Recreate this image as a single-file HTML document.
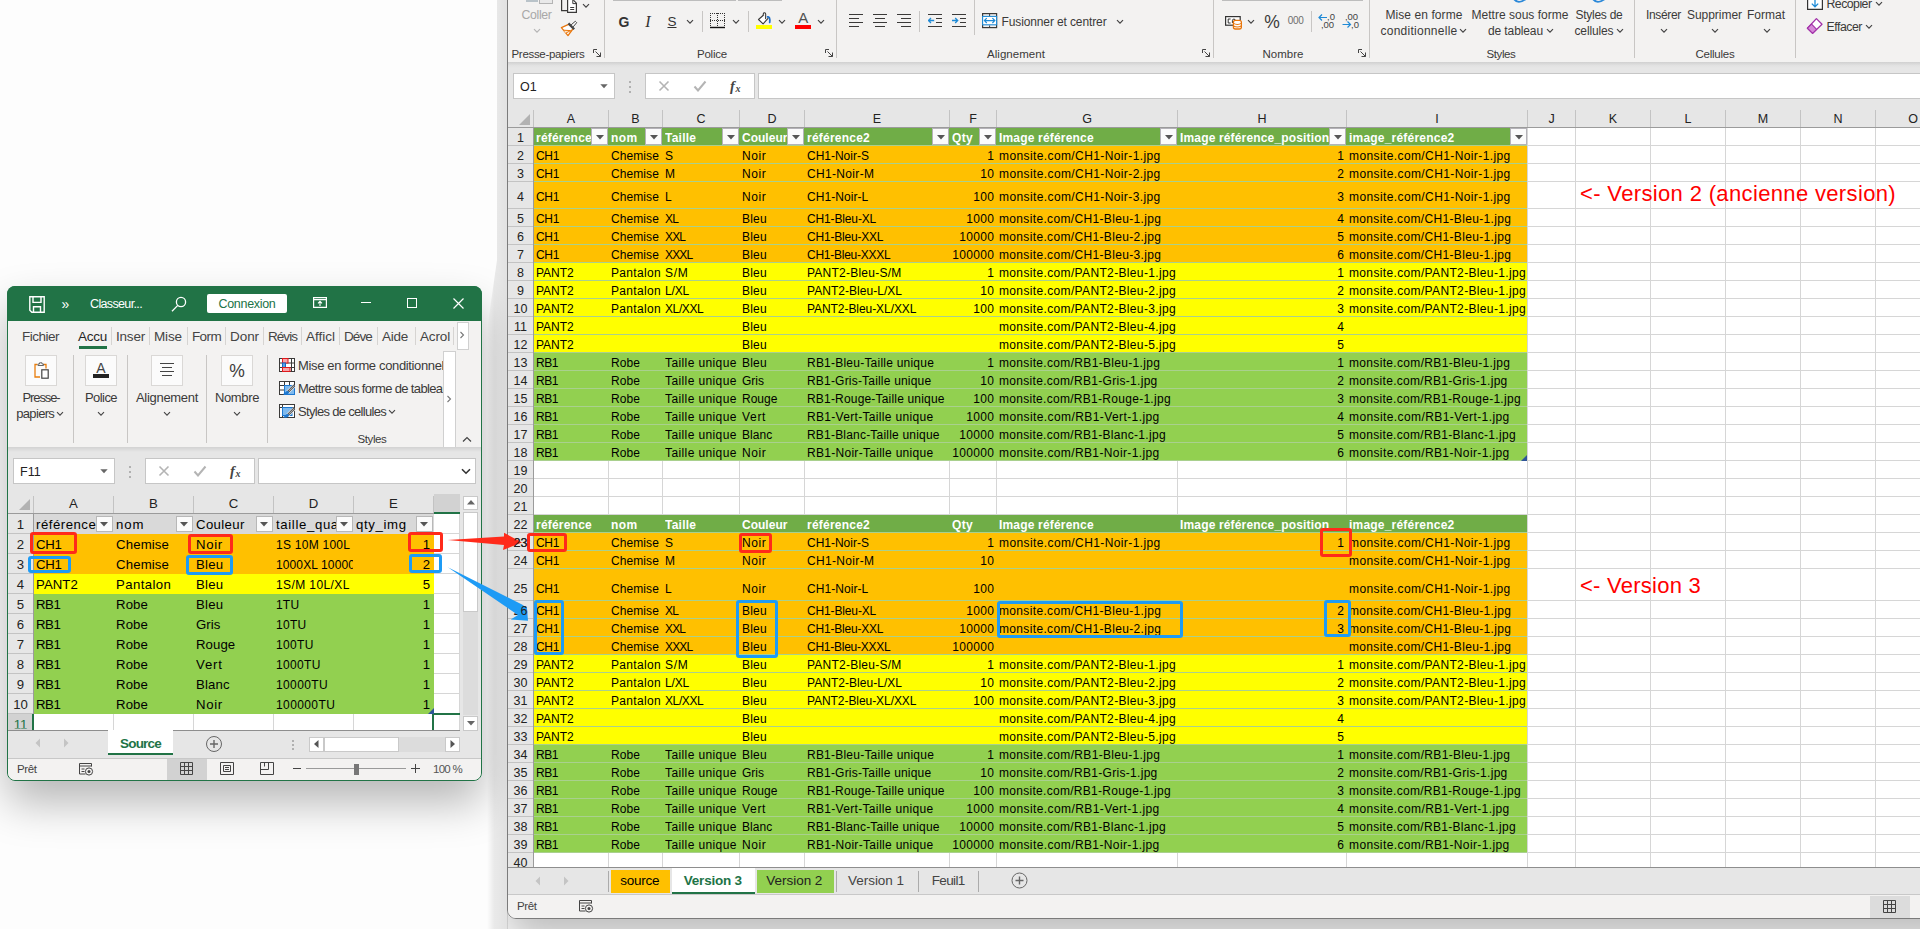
<!DOCTYPE html>
<html lang="fr"><head><meta charset="utf-8"><title>Excel</title><style>
html,body{margin:0;padding:0}
body{width:1920px;height:929px;overflow:hidden;background:#fdfdfd;position:relative;font-family:"Liberation Sans",sans-serif}
body div,body svg{position:absolute;box-sizing:border-box}
.t{white-space:nowrap}
</style></head><body>
<div style="left:7px;top:286px;width:475px;height:495px;border-radius:8px;box-shadow:0 22px 44px rgba(0,0,0,.28)"></div>
<div style="left:507px;top:-60px;width:1500px;height:979px;border-radius:0 0 0 9px;box-shadow:0 20px 40px rgba(0,0,0,.26);clip-path:inset(0 0 -200px 0)"></div>
<div style="left:487px;top:0;width:21px;height:929px;background:linear-gradient(to right,rgba(0,0,0,0),rgba(0,0,0,.08) 35%,rgba(0,0,0,.11));clip-path:polygon(10px 0,21px 0,21px 929px,0 929px,0 330px,10px 260px)"></div>
<div style="left:507px;top:-40px;width:1500px;height:959px;background:#f3f2f1;border:1px solid #7b7b7b;border-radius:0 0 0 9px"></div>
<div style="left:508px;top:62px;width:1420px;height:47px;background:#e6e6e6;"></div>
<div style="left:508px;top:62px;width:1420px;height:6px;background:linear-gradient(#d0d0d0,#e2e2e2 60%,#e6e6e6)"></div>
<div style="left:513px;top:73px;width:102px;height:26px;background:#fff;border:1px solid #c6c6c6"></div>
<div class="t" style="top:77.5px;font-size:12.5px;line-height:18px;color:#222;left:520px;">O1</div>
<svg style="left:600px;top:84px;" width="8" height="5" viewBox="0 0 8 5"><path d="M0.3 0.3h7.4l-3.7 3.9z" fill="#666"/></svg>
<div style="left:629px;top:81px;width:2px;height:2px;background:#b0b0b0;"></div>
<div style="left:629px;top:86px;width:2px;height:2px;background:#b0b0b0;"></div>
<div style="left:629px;top:91px;width:2px;height:2px;background:#b0b0b0;"></div>
<div style="left:645px;top:73px;width:110px;height:26px;background:#fff;border:1px solid #c6c6c6"></div>
<svg style="left:658px;top:80px;" width="12" height="12" viewBox="0 0 12 12"><path d="M1.5 1.5l9 9M10.5 1.5l-9 9" stroke="#b4b4b4" stroke-width="1.6" fill="none"/></svg>
<svg style="left:693px;top:80px;" width="14" height="12" viewBox="0 0 14 12"><path d="M1.5 6.5l3.5 4l7.5-9" stroke="#b4b4b4" stroke-width="2" fill="none"/></svg>
<div class="t" style="top:76px;font-size:14.5px;line-height:20px;color:#444;font-weight:bold;font-style:italic;left:730px;font-family:'Liberation Serif',serif;">f</div>
<div class="t" style="top:81.5px;font-size:10px;line-height:14px;color:#444;font-weight:bold;font-style:italic;left:735.5px;font-family:'Liberation Serif',serif;">x</div>
<div style="left:758px;top:73px;width:1170px;height:26px;background:#fff;border:1px solid #c6c6c6"></div>
<div style="left:508px;top:109px;width:1420px;height:19px;background:#e6e6e6;"></div>
<div style="left:508px;top:127px;width:1420px;height:1px;background:#9b9b9b;"></div>
<div style="left:534px;top:128px;width:1400px;height:739px;background:#fff;"></div>
<div style="left:508px;top:128px;width:25px;height:739px;background:#e6e6e6;"></div>
<div style="left:533px;top:128px;width:1px;height:739px;background:#9b9b9b;"></div>
<svg style="left:518px;top:113px;" width="13" height="13" viewBox="0 0 13 13"><path d="M12 1v11h-11z" fill="#b2b2b2"/></svg>
<div style="left:533px;top:110px;width:1px;height:17px;background:#c3c3c3;"></div>
<div class="t" style="top:109.5px;font-size:12.5px;line-height:18px;color:#222;left:371px;width:400px;text-align:center;">A</div>
<div style="left:608px;top:110px;width:1px;height:17px;background:#c3c3c3;"></div>
<div class="t" style="top:109.5px;font-size:12.5px;line-height:18px;color:#222;left:435.5px;width:400px;text-align:center;">B</div>
<div style="left:662px;top:110px;width:1px;height:17px;background:#c3c3c3;"></div>
<div class="t" style="top:109.5px;font-size:12.5px;line-height:18px;color:#222;left:501px;width:400px;text-align:center;">C</div>
<div style="left:739px;top:110px;width:1px;height:17px;background:#c3c3c3;"></div>
<div class="t" style="top:109.5px;font-size:12.5px;line-height:18px;color:#222;left:572px;width:400px;text-align:center;">D</div>
<div style="left:804px;top:110px;width:1px;height:17px;background:#c3c3c3;"></div>
<div class="t" style="top:109.5px;font-size:12.5px;line-height:18px;color:#222;left:677px;width:400px;text-align:center;">E</div>
<div style="left:949px;top:110px;width:1px;height:17px;background:#c3c3c3;"></div>
<div class="t" style="top:109.5px;font-size:12.5px;line-height:18px;color:#222;left:773px;width:400px;text-align:center;">F</div>
<div style="left:996px;top:110px;width:1px;height:17px;background:#c3c3c3;"></div>
<div class="t" style="top:109.5px;font-size:12.5px;line-height:18px;color:#222;left:887px;width:400px;text-align:center;">G</div>
<div style="left:1177px;top:110px;width:1px;height:17px;background:#c3c3c3;"></div>
<div class="t" style="top:109.5px;font-size:12.5px;line-height:18px;color:#222;left:1062px;width:400px;text-align:center;">H</div>
<div style="left:1346px;top:110px;width:1px;height:17px;background:#c3c3c3;"></div>
<div class="t" style="top:109.5px;font-size:12.5px;line-height:18px;color:#222;left:1237px;width:400px;text-align:center;">I</div>
<div style="left:1527px;top:110px;width:1px;height:17px;background:#c3c3c3;"></div>
<div class="t" style="top:109.5px;font-size:12.5px;line-height:18px;color:#222;left:1351.5px;width:400px;text-align:center;">J</div>
<div style="left:1575px;top:110px;width:1px;height:17px;background:#c3c3c3;"></div>
<div class="t" style="top:109.5px;font-size:12.5px;line-height:18px;color:#222;left:1413px;width:400px;text-align:center;">K</div>
<div style="left:1650px;top:110px;width:1px;height:17px;background:#c3c3c3;"></div>
<div class="t" style="top:109.5px;font-size:12.5px;line-height:18px;color:#222;left:1488px;width:400px;text-align:center;">L</div>
<div style="left:1725px;top:110px;width:1px;height:17px;background:#c3c3c3;"></div>
<div class="t" style="top:109.5px;font-size:12.5px;line-height:18px;color:#222;left:1563px;width:400px;text-align:center;">M</div>
<div style="left:1800px;top:110px;width:1px;height:17px;background:#c3c3c3;"></div>
<div class="t" style="top:109.5px;font-size:12.5px;line-height:18px;color:#222;left:1638px;width:400px;text-align:center;">N</div>
<div style="left:1875px;top:110px;width:1px;height:17px;background:#c3c3c3;"></div>
<div class="t" style="top:109.5px;font-size:12.5px;line-height:18px;color:#222;left:1713px;width:400px;text-align:center;">O</div>
<div style="left:608px;top:128px;width:1px;height:739px;background:#d6d6d6;"></div>
<div style="left:662px;top:128px;width:1px;height:739px;background:#d6d6d6;"></div>
<div style="left:739px;top:128px;width:1px;height:739px;background:#d6d6d6;"></div>
<div style="left:804px;top:128px;width:1px;height:739px;background:#d6d6d6;"></div>
<div style="left:949px;top:128px;width:1px;height:739px;background:#d6d6d6;"></div>
<div style="left:996px;top:128px;width:1px;height:739px;background:#d6d6d6;"></div>
<div style="left:1177px;top:128px;width:1px;height:739px;background:#d6d6d6;"></div>
<div style="left:1346px;top:128px;width:1px;height:739px;background:#d6d6d6;"></div>
<div style="left:1527px;top:128px;width:1px;height:739px;background:#d6d6d6;"></div>
<div style="left:1575px;top:128px;width:1px;height:739px;background:#d6d6d6;"></div>
<div style="left:1650px;top:128px;width:1px;height:739px;background:#d6d6d6;"></div>
<div style="left:1725px;top:128px;width:1px;height:739px;background:#d6d6d6;"></div>
<div style="left:1800px;top:128px;width:1px;height:739px;background:#d6d6d6;"></div>
<div style="left:1875px;top:128px;width:1px;height:739px;background:#d6d6d6;"></div>
<div style="left:534px;top:145px;width:1400px;height:1px;background:#d6d6d6;"></div>
<div style="left:508px;top:145px;width:25px;height:1px;background:#c3c3c3;"></div>
<div class="t" style="top:128.5px;font-size:12.5px;line-height:18px;color:#222;left:320.5px;width:400px;text-align:center;">1</div>
<div style="left:534px;top:163px;width:1400px;height:1px;background:#d6d6d6;"></div>
<div style="left:508px;top:163px;width:25px;height:1px;background:#c3c3c3;"></div>
<div class="t" style="top:146.5px;font-size:12.5px;line-height:18px;color:#222;left:320.5px;width:400px;text-align:center;">2</div>
<div style="left:534px;top:181px;width:1400px;height:1px;background:#d6d6d6;"></div>
<div style="left:508px;top:181px;width:25px;height:1px;background:#c3c3c3;"></div>
<div class="t" style="top:164.5px;font-size:12.5px;line-height:18px;color:#222;left:320.5px;width:400px;text-align:center;">3</div>
<div style="left:534px;top:208px;width:1400px;height:1px;background:#d6d6d6;"></div>
<div style="left:508px;top:208px;width:25px;height:1px;background:#c3c3c3;"></div>
<div class="t" style="top:187.5px;font-size:12.5px;line-height:18px;color:#222;left:320.5px;width:400px;text-align:center;">4</div>
<div style="left:534px;top:226px;width:1400px;height:1px;background:#d6d6d6;"></div>
<div style="left:508px;top:226px;width:25px;height:1px;background:#c3c3c3;"></div>
<div class="t" style="top:209.5px;font-size:12.5px;line-height:18px;color:#222;left:320.5px;width:400px;text-align:center;">5</div>
<div style="left:534px;top:244px;width:1400px;height:1px;background:#d6d6d6;"></div>
<div style="left:508px;top:244px;width:25px;height:1px;background:#c3c3c3;"></div>
<div class="t" style="top:227.5px;font-size:12.5px;line-height:18px;color:#222;left:320.5px;width:400px;text-align:center;">6</div>
<div style="left:534px;top:262px;width:1400px;height:1px;background:#d6d6d6;"></div>
<div style="left:508px;top:262px;width:25px;height:1px;background:#c3c3c3;"></div>
<div class="t" style="top:245.5px;font-size:12.5px;line-height:18px;color:#222;left:320.5px;width:400px;text-align:center;">7</div>
<div style="left:534px;top:280px;width:1400px;height:1px;background:#d6d6d6;"></div>
<div style="left:508px;top:280px;width:25px;height:1px;background:#c3c3c3;"></div>
<div class="t" style="top:263.5px;font-size:12.5px;line-height:18px;color:#222;left:320.5px;width:400px;text-align:center;">8</div>
<div style="left:534px;top:298px;width:1400px;height:1px;background:#d6d6d6;"></div>
<div style="left:508px;top:298px;width:25px;height:1px;background:#c3c3c3;"></div>
<div class="t" style="top:281.5px;font-size:12.5px;line-height:18px;color:#222;left:320.5px;width:400px;text-align:center;">9</div>
<div style="left:534px;top:316px;width:1400px;height:1px;background:#d6d6d6;"></div>
<div style="left:508px;top:316px;width:25px;height:1px;background:#c3c3c3;"></div>
<div class="t" style="top:299.5px;font-size:12.5px;line-height:18px;color:#222;left:320.5px;width:400px;text-align:center;">10</div>
<div style="left:534px;top:334px;width:1400px;height:1px;background:#d6d6d6;"></div>
<div style="left:508px;top:334px;width:25px;height:1px;background:#c3c3c3;"></div>
<div class="t" style="top:317.5px;font-size:12.5px;line-height:18px;color:#222;left:320.5px;width:400px;text-align:center;">11</div>
<div style="left:534px;top:352px;width:1400px;height:1px;background:#d6d6d6;"></div>
<div style="left:508px;top:352px;width:25px;height:1px;background:#c3c3c3;"></div>
<div class="t" style="top:335.5px;font-size:12.5px;line-height:18px;color:#222;left:320.5px;width:400px;text-align:center;">12</div>
<div style="left:534px;top:370px;width:1400px;height:1px;background:#d6d6d6;"></div>
<div style="left:508px;top:370px;width:25px;height:1px;background:#c3c3c3;"></div>
<div class="t" style="top:353.5px;font-size:12.5px;line-height:18px;color:#222;left:320.5px;width:400px;text-align:center;">13</div>
<div style="left:534px;top:388px;width:1400px;height:1px;background:#d6d6d6;"></div>
<div style="left:508px;top:388px;width:25px;height:1px;background:#c3c3c3;"></div>
<div class="t" style="top:371.5px;font-size:12.5px;line-height:18px;color:#222;left:320.5px;width:400px;text-align:center;">14</div>
<div style="left:534px;top:406px;width:1400px;height:1px;background:#d6d6d6;"></div>
<div style="left:508px;top:406px;width:25px;height:1px;background:#c3c3c3;"></div>
<div class="t" style="top:389.5px;font-size:12.5px;line-height:18px;color:#222;left:320.5px;width:400px;text-align:center;">15</div>
<div style="left:534px;top:424px;width:1400px;height:1px;background:#d6d6d6;"></div>
<div style="left:508px;top:424px;width:25px;height:1px;background:#c3c3c3;"></div>
<div class="t" style="top:407.5px;font-size:12.5px;line-height:18px;color:#222;left:320.5px;width:400px;text-align:center;">16</div>
<div style="left:534px;top:442px;width:1400px;height:1px;background:#d6d6d6;"></div>
<div style="left:508px;top:442px;width:25px;height:1px;background:#c3c3c3;"></div>
<div class="t" style="top:425.5px;font-size:12.5px;line-height:18px;color:#222;left:320.5px;width:400px;text-align:center;">17</div>
<div style="left:534px;top:460px;width:1400px;height:1px;background:#d6d6d6;"></div>
<div style="left:508px;top:460px;width:25px;height:1px;background:#c3c3c3;"></div>
<div class="t" style="top:443.5px;font-size:12.5px;line-height:18px;color:#222;left:320.5px;width:400px;text-align:center;">18</div>
<div style="left:534px;top:478px;width:1400px;height:1px;background:#d6d6d6;"></div>
<div style="left:508px;top:478px;width:25px;height:1px;background:#c3c3c3;"></div>
<div class="t" style="top:461.5px;font-size:12.5px;line-height:18px;color:#222;left:320.5px;width:400px;text-align:center;">19</div>
<div style="left:534px;top:496px;width:1400px;height:1px;background:#d6d6d6;"></div>
<div style="left:508px;top:496px;width:25px;height:1px;background:#c3c3c3;"></div>
<div class="t" style="top:479.5px;font-size:12.5px;line-height:18px;color:#222;left:320.5px;width:400px;text-align:center;">20</div>
<div style="left:534px;top:514px;width:1400px;height:1px;background:#d6d6d6;"></div>
<div style="left:508px;top:514px;width:25px;height:1px;background:#c3c3c3;"></div>
<div class="t" style="top:497.5px;font-size:12.5px;line-height:18px;color:#222;left:320.5px;width:400px;text-align:center;">21</div>
<div style="left:534px;top:532px;width:1400px;height:1px;background:#d6d6d6;"></div>
<div style="left:508px;top:532px;width:25px;height:1px;background:#c3c3c3;"></div>
<div class="t" style="top:515.5px;font-size:12.5px;line-height:18px;color:#222;left:320.5px;width:400px;text-align:center;">22</div>
<div style="left:534px;top:550px;width:1400px;height:1px;background:#d6d6d6;"></div>
<div style="left:508px;top:550px;width:25px;height:1px;background:#c3c3c3;"></div>
<div class="t" style="top:533.5px;font-size:12.5px;line-height:18px;color:#222;left:320.5px;width:400px;text-align:center;">23</div>
<div style="left:534px;top:568px;width:1400px;height:1px;background:#d6d6d6;"></div>
<div style="left:508px;top:568px;width:25px;height:1px;background:#c3c3c3;"></div>
<div class="t" style="top:551.5px;font-size:12.5px;line-height:18px;color:#222;left:320.5px;width:400px;text-align:center;">24</div>
<div style="left:534px;top:600px;width:1400px;height:1px;background:#d6d6d6;"></div>
<div style="left:508px;top:600px;width:25px;height:1px;background:#c3c3c3;"></div>
<div class="t" style="top:579.5px;font-size:12.5px;line-height:18px;color:#222;left:320.5px;width:400px;text-align:center;">25</div>
<div style="left:534px;top:618px;width:1400px;height:1px;background:#d6d6d6;"></div>
<div style="left:508px;top:618px;width:25px;height:1px;background:#c3c3c3;"></div>
<div class="t" style="top:601.5px;font-size:12.5px;line-height:18px;color:#222;left:320.5px;width:400px;text-align:center;">26</div>
<div style="left:534px;top:636px;width:1400px;height:1px;background:#d6d6d6;"></div>
<div style="left:508px;top:636px;width:25px;height:1px;background:#c3c3c3;"></div>
<div class="t" style="top:619.5px;font-size:12.5px;line-height:18px;color:#222;left:320.5px;width:400px;text-align:center;">27</div>
<div style="left:534px;top:654px;width:1400px;height:1px;background:#d6d6d6;"></div>
<div style="left:508px;top:654px;width:25px;height:1px;background:#c3c3c3;"></div>
<div class="t" style="top:637.5px;font-size:12.5px;line-height:18px;color:#222;left:320.5px;width:400px;text-align:center;">28</div>
<div style="left:534px;top:672px;width:1400px;height:1px;background:#d6d6d6;"></div>
<div style="left:508px;top:672px;width:25px;height:1px;background:#c3c3c3;"></div>
<div class="t" style="top:655.5px;font-size:12.5px;line-height:18px;color:#222;left:320.5px;width:400px;text-align:center;">29</div>
<div style="left:534px;top:690px;width:1400px;height:1px;background:#d6d6d6;"></div>
<div style="left:508px;top:690px;width:25px;height:1px;background:#c3c3c3;"></div>
<div class="t" style="top:673.5px;font-size:12.5px;line-height:18px;color:#222;left:320.5px;width:400px;text-align:center;">30</div>
<div style="left:534px;top:708px;width:1400px;height:1px;background:#d6d6d6;"></div>
<div style="left:508px;top:708px;width:25px;height:1px;background:#c3c3c3;"></div>
<div class="t" style="top:691.5px;font-size:12.5px;line-height:18px;color:#222;left:320.5px;width:400px;text-align:center;">31</div>
<div style="left:534px;top:726px;width:1400px;height:1px;background:#d6d6d6;"></div>
<div style="left:508px;top:726px;width:25px;height:1px;background:#c3c3c3;"></div>
<div class="t" style="top:709.5px;font-size:12.5px;line-height:18px;color:#222;left:320.5px;width:400px;text-align:center;">32</div>
<div style="left:534px;top:744px;width:1400px;height:1px;background:#d6d6d6;"></div>
<div style="left:508px;top:744px;width:25px;height:1px;background:#c3c3c3;"></div>
<div class="t" style="top:727.5px;font-size:12.5px;line-height:18px;color:#222;left:320.5px;width:400px;text-align:center;">33</div>
<div style="left:534px;top:762px;width:1400px;height:1px;background:#d6d6d6;"></div>
<div style="left:508px;top:762px;width:25px;height:1px;background:#c3c3c3;"></div>
<div class="t" style="top:745.5px;font-size:12.5px;line-height:18px;color:#222;left:320.5px;width:400px;text-align:center;">34</div>
<div style="left:534px;top:780px;width:1400px;height:1px;background:#d6d6d6;"></div>
<div style="left:508px;top:780px;width:25px;height:1px;background:#c3c3c3;"></div>
<div class="t" style="top:763.5px;font-size:12.5px;line-height:18px;color:#222;left:320.5px;width:400px;text-align:center;">35</div>
<div style="left:534px;top:798px;width:1400px;height:1px;background:#d6d6d6;"></div>
<div style="left:508px;top:798px;width:25px;height:1px;background:#c3c3c3;"></div>
<div class="t" style="top:781.5px;font-size:12.5px;line-height:18px;color:#222;left:320.5px;width:400px;text-align:center;">36</div>
<div style="left:534px;top:816px;width:1400px;height:1px;background:#d6d6d6;"></div>
<div style="left:508px;top:816px;width:25px;height:1px;background:#c3c3c3;"></div>
<div class="t" style="top:799.5px;font-size:12.5px;line-height:18px;color:#222;left:320.5px;width:400px;text-align:center;">37</div>
<div style="left:534px;top:834px;width:1400px;height:1px;background:#d6d6d6;"></div>
<div style="left:508px;top:834px;width:25px;height:1px;background:#c3c3c3;"></div>
<div class="t" style="top:817.5px;font-size:12.5px;line-height:18px;color:#222;left:320.5px;width:400px;text-align:center;">38</div>
<div style="left:534px;top:852px;width:1400px;height:1px;background:#d6d6d6;"></div>
<div style="left:508px;top:852px;width:25px;height:1px;background:#c3c3c3;"></div>
<div class="t" style="top:835.5px;font-size:12.5px;line-height:18px;color:#222;left:320.5px;width:400px;text-align:center;">39</div>
<div class="t" style="top:853.5px;font-size:12.5px;line-height:18px;color:#222;left:320.5px;width:400px;text-align:center;clip-path:inset(0 0 4px 0);">40</div>
<div style="left:534px;top:128px;width:993px;height:18px;background:#70ad47;"></div>
<div style="left:534px;top:146px;width:993px;height:117px;background:#ffc000;"></div>
<div style="left:534px;top:263px;width:993px;height:90px;background:#ffff00;"></div>
<div style="left:534px;top:353px;width:993px;height:108px;background:#92d050;"></div>
<div style="left:534px;top:145px;width:993px;height:1px;background:#a9d08e;"></div>
<div style="left:534px;top:163px;width:993px;height:1px;background:#a9d08e;"></div>
<div style="left:534px;top:181px;width:993px;height:1px;background:#a9d08e;"></div>
<div style="left:534px;top:208px;width:993px;height:1px;background:#a9d08e;"></div>
<div style="left:534px;top:226px;width:993px;height:1px;background:#a9d08e;"></div>
<div style="left:534px;top:244px;width:993px;height:1px;background:#a9d08e;"></div>
<div style="left:534px;top:262px;width:993px;height:1px;background:#a9d08e;"></div>
<div style="left:534px;top:280px;width:993px;height:1px;background:#a9d08e;"></div>
<div style="left:534px;top:298px;width:993px;height:1px;background:#a9d08e;"></div>
<div style="left:534px;top:316px;width:993px;height:1px;background:#a9d08e;"></div>
<div style="left:534px;top:334px;width:993px;height:1px;background:#a9d08e;"></div>
<div style="left:534px;top:352px;width:993px;height:1px;background:#a9d08e;"></div>
<div style="left:534px;top:370px;width:993px;height:1px;background:#a9d08e;"></div>
<div style="left:534px;top:388px;width:993px;height:1px;background:#a9d08e;"></div>
<div style="left:534px;top:406px;width:993px;height:1px;background:#a9d08e;"></div>
<div style="left:534px;top:424px;width:993px;height:1px;background:#a9d08e;"></div>
<div style="left:534px;top:442px;width:993px;height:1px;background:#a9d08e;"></div>
<div style="left:534px;top:460px;width:993px;height:1px;background:#a9d08e;"></div>
<div class="t" style="top:130px;font-size:12px;line-height:17px;color:#fff;font-weight:bold;letter-spacing:0.207px;left:536px;width:56px;overflow:hidden;">référence</div>
<div style="left:591px;top:128px;width:17px;height:17px;background:#fbfbfb;border:1px solid #b4b2b8"></div>
<svg style="left:596px;top:135px;" width="8" height="5" viewBox="0 0 8 5"><path d="M0 0h8l-4 4.5z" fill="#555"/></svg>
<div class="t" style="top:130px;font-size:12px;line-height:17px;color:#fff;font-weight:bold;letter-spacing:0.367px;left:611px;width:35px;overflow:hidden;">nom</div>
<div style="left:645px;top:128px;width:17px;height:17px;background:#fbfbfb;border:1px solid #b4b2b8"></div>
<svg style="left:650px;top:135px;" width="8" height="5" viewBox="0 0 8 5"><path d="M0 0h8l-4 4.5z" fill="#555"/></svg>
<div class="t" style="top:130px;font-size:12px;line-height:17px;color:#fff;font-weight:bold;letter-spacing:0.238px;left:665px;width:58px;overflow:hidden;">Taille</div>
<div style="left:722px;top:128px;width:17px;height:17px;background:#fbfbfb;border:1px solid #b4b2b8"></div>
<svg style="left:727px;top:135px;" width="8" height="5" viewBox="0 0 8 5"><path d="M0 0h8l-4 4.5z" fill="#555"/></svg>
<div class="t" style="top:130px;font-size:12px;line-height:17px;color:#fff;font-weight:bold;letter-spacing:0.014px;left:742px;width:46px;overflow:hidden;">Couleur</div>
<div style="left:787px;top:128px;width:17px;height:17px;background:#fbfbfb;border:1px solid #b4b2b8"></div>
<svg style="left:792px;top:135px;" width="8" height="5" viewBox="0 0 8 5"><path d="M0 0h8l-4 4.5z" fill="#555"/></svg>
<div class="t" style="top:130px;font-size:12px;line-height:17px;color:#fff;font-weight:bold;letter-spacing:0.229px;left:807px;width:126px;overflow:hidden;">référence2</div>
<div style="left:932px;top:128px;width:17px;height:17px;background:#fbfbfb;border:1px solid #b4b2b8"></div>
<svg style="left:937px;top:135px;" width="8" height="5" viewBox="0 0 8 5"><path d="M0 0h8l-4 4.5z" fill="#555"/></svg>
<div class="t" style="top:130px;font-size:12px;line-height:17px;color:#fff;font-weight:bold;letter-spacing:0.365px;left:952px;width:28px;overflow:hidden;">Qty</div>
<div style="left:979px;top:128px;width:17px;height:17px;background:#fbfbfb;border:1px solid #b4b2b8"></div>
<svg style="left:984px;top:135px;" width="8" height="5" viewBox="0 0 8 5"><path d="M0 0h8l-4 4.5z" fill="#555"/></svg>
<div class="t" style="top:130px;font-size:12px;line-height:17px;color:#fff;font-weight:bold;letter-spacing:0.182px;left:999px;width:162px;overflow:hidden;">Image référence</div>
<div style="left:1160px;top:128px;width:17px;height:17px;background:#fbfbfb;border:1px solid #b4b2b8"></div>
<svg style="left:1165px;top:135px;" width="8" height="5" viewBox="0 0 8 5"><path d="M0 0h8l-4 4.5z" fill="#555"/></svg>
<div class="t" style="top:130px;font-size:12px;line-height:17px;color:#fff;font-weight:bold;letter-spacing:0.158px;left:1180px;width:150px;overflow:hidden;">Image référence_position</div>
<div style="left:1329px;top:128px;width:17px;height:17px;background:#fbfbfb;border:1px solid #b4b2b8"></div>
<svg style="left:1334px;top:135px;" width="8" height="5" viewBox="0 0 8 5"><path d="M0 0h8l-4 4.5z" fill="#555"/></svg>
<div class="t" style="top:130px;font-size:12px;line-height:17px;color:#fff;font-weight:bold;letter-spacing:0.208px;left:1349px;width:162px;overflow:hidden;">image_référence2</div>
<div style="left:1510px;top:128px;width:17px;height:17px;background:#fbfbfb;border:1px solid #b4b2b8"></div>
<svg style="left:1515px;top:135px;" width="8" height="5" viewBox="0 0 8 5"><path d="M0 0h8l-4 4.5z" fill="#555"/></svg>
<div class="t" style="top:148px;font-size:12px;line-height:17px;color:#000;letter-spacing:-0.352px;left:536px;width:73px;overflow:hidden;">CH1</div>
<div class="t" style="top:148px;font-size:12px;line-height:17px;color:#000;letter-spacing:0.082px;left:611px;width:52px;overflow:hidden;">Chemise</div>
<div class="t" style="top:148px;font-size:12px;line-height:17px;color:#000;left:665px;width:75px;overflow:hidden;">S</div>
<div class="t" style="top:148px;font-size:12px;line-height:17px;color:#000;letter-spacing:0.540px;left:742px;width:63px;overflow:hidden;">Noir</div>
<div class="t" style="top:148px;font-size:12px;line-height:17px;color:#000;letter-spacing:-0.011px;left:807px;width:143px;overflow:hidden;">CH1-Noir-S</div>
<div class="t" style="top:148px;font-size:12px;line-height:17px;color:#000;right:926px;text-align:right;">1</div>
<div class="t" style="top:148px;font-size:12px;line-height:17px;color:#000;letter-spacing:0.394px;left:999px;width:179px;overflow:hidden;">monsite.com/CH1-Noir-1.jpg</div>
<div class="t" style="top:148px;font-size:12px;line-height:17px;color:#000;right:576px;text-align:right;">1</div>
<div class="t" style="top:148px;font-size:12px;line-height:17px;color:#000;letter-spacing:0.394px;left:1349px;width:179px;overflow:hidden;">monsite.com/CH1-Noir-1.jpg</div>
<div class="t" style="top:166px;font-size:12px;line-height:17px;color:#000;letter-spacing:-0.352px;left:536px;width:73px;overflow:hidden;">CH1</div>
<div class="t" style="top:166px;font-size:12px;line-height:17px;color:#000;letter-spacing:0.082px;left:611px;width:52px;overflow:hidden;">Chemise</div>
<div class="t" style="top:166px;font-size:12px;line-height:17px;color:#000;left:665px;width:75px;overflow:hidden;">M</div>
<div class="t" style="top:166px;font-size:12px;line-height:17px;color:#000;letter-spacing:0.540px;left:742px;width:63px;overflow:hidden;">Noir</div>
<div class="t" style="top:166px;font-size:12px;line-height:17px;color:#000;letter-spacing:0.336px;left:807px;width:143px;overflow:hidden;">CH1-Noir-M</div>
<div class="t" style="top:166px;font-size:12px;line-height:17px;color:#000;letter-spacing:0.323px;right:925.677px;text-align:right;">10</div>
<div class="t" style="top:166px;font-size:12px;line-height:17px;color:#000;letter-spacing:0.394px;left:999px;width:179px;overflow:hidden;">monsite.com/CH1-Noir-2.jpg</div>
<div class="t" style="top:166px;font-size:12px;line-height:17px;color:#000;right:576px;text-align:right;">2</div>
<div class="t" style="top:166px;font-size:12px;line-height:17px;color:#000;letter-spacing:0.394px;left:1349px;width:179px;overflow:hidden;">monsite.com/CH1-Noir-1.jpg</div>
<div class="t" style="top:189px;font-size:12px;line-height:17px;color:#000;letter-spacing:-0.352px;left:536px;width:73px;overflow:hidden;">CH1</div>
<div class="t" style="top:189px;font-size:12px;line-height:17px;color:#000;letter-spacing:0.082px;left:611px;width:52px;overflow:hidden;">Chemise</div>
<div class="t" style="top:189px;font-size:12px;line-height:17px;color:#000;left:665px;width:75px;overflow:hidden;">L</div>
<div class="t" style="top:189px;font-size:12px;line-height:17px;color:#000;letter-spacing:0.540px;left:742px;width:63px;overflow:hidden;">Noir</div>
<div class="t" style="top:189px;font-size:12px;line-height:17px;color:#000;letter-spacing:0.068px;left:807px;width:143px;overflow:hidden;">CH1-Noir-L</div>
<div class="t" style="top:189px;font-size:12px;line-height:17px;color:#000;letter-spacing:0.323px;right:925.677px;text-align:right;">100</div>
<div class="t" style="top:189px;font-size:12px;line-height:17px;color:#000;letter-spacing:0.394px;left:999px;width:179px;overflow:hidden;">monsite.com/CH1-Noir-3.jpg</div>
<div class="t" style="top:189px;font-size:12px;line-height:17px;color:#000;right:576px;text-align:right;">3</div>
<div class="t" style="top:189px;font-size:12px;line-height:17px;color:#000;letter-spacing:0.394px;left:1349px;width:179px;overflow:hidden;">monsite.com/CH1-Noir-1.jpg</div>
<div class="t" style="top:211px;font-size:12px;line-height:17px;color:#000;letter-spacing:-0.352px;left:536px;width:73px;overflow:hidden;">CH1</div>
<div class="t" style="top:211px;font-size:12px;line-height:17px;color:#000;letter-spacing:0.082px;left:611px;width:52px;overflow:hidden;">Chemise</div>
<div class="t" style="top:211px;font-size:12px;line-height:17px;color:#000;letter-spacing:-0.860px;left:665px;width:75px;overflow:hidden;">XL</div>
<div class="t" style="top:211px;font-size:12px;line-height:17px;color:#000;letter-spacing:0.192px;left:742px;width:63px;overflow:hidden;">Bleu</div>
<div class="t" style="top:211px;font-size:12px;line-height:17px;color:#000;letter-spacing:-0.141px;left:807px;width:143px;overflow:hidden;">CH1-Bleu-XL</div>
<div class="t" style="top:211px;font-size:12px;line-height:17px;color:#000;letter-spacing:0.323px;right:925.677px;text-align:right;">1000</div>
<div class="t" style="top:211px;font-size:12px;line-height:17px;color:#000;letter-spacing:0.340px;left:999px;width:179px;overflow:hidden;">monsite.com/CH1-Bleu-1.jpg</div>
<div class="t" style="top:211px;font-size:12px;line-height:17px;color:#000;right:576px;text-align:right;">4</div>
<div class="t" style="top:211px;font-size:12px;line-height:17px;color:#000;letter-spacing:0.340px;left:1349px;width:179px;overflow:hidden;">monsite.com/CH1-Bleu-1.jpg</div>
<div class="t" style="top:229px;font-size:12px;line-height:17px;color:#000;letter-spacing:-0.352px;left:536px;width:73px;overflow:hidden;">CH1</div>
<div class="t" style="top:229px;font-size:12px;line-height:17px;color:#000;letter-spacing:0.082px;left:611px;width:52px;overflow:hidden;">Chemise</div>
<div class="t" style="top:229px;font-size:12px;line-height:17px;color:#000;letter-spacing:-0.854px;left:665px;width:75px;overflow:hidden;">XXL</div>
<div class="t" style="top:229px;font-size:12px;line-height:17px;color:#000;letter-spacing:0.192px;left:742px;width:63px;overflow:hidden;">Bleu</div>
<div class="t" style="top:229px;font-size:12px;line-height:17px;color:#000;letter-spacing:-0.200px;left:807px;width:143px;overflow:hidden;">CH1-Bleu-XXL</div>
<div class="t" style="top:229px;font-size:12px;line-height:17px;color:#000;letter-spacing:0.323px;right:925.677px;text-align:right;">10000</div>
<div class="t" style="top:229px;font-size:12px;line-height:17px;color:#000;letter-spacing:0.340px;left:999px;width:179px;overflow:hidden;">monsite.com/CH1-Bleu-2.jpg</div>
<div class="t" style="top:229px;font-size:12px;line-height:17px;color:#000;right:576px;text-align:right;">5</div>
<div class="t" style="top:229px;font-size:12px;line-height:17px;color:#000;letter-spacing:0.340px;left:1349px;width:179px;overflow:hidden;">monsite.com/CH1-Bleu-1.jpg</div>
<div class="t" style="top:247px;font-size:12px;line-height:17px;color:#000;letter-spacing:-0.352px;left:536px;width:73px;overflow:hidden;">CH1</div>
<div class="t" style="top:247px;font-size:12px;line-height:17px;color:#000;letter-spacing:0.082px;left:611px;width:52px;overflow:hidden;">Chemise</div>
<div class="t" style="top:247px;font-size:12px;line-height:17px;color:#000;letter-spacing:-0.851px;left:665px;width:75px;overflow:hidden;">XXXL</div>
<div class="t" style="top:247px;font-size:12px;line-height:17px;color:#000;letter-spacing:0.192px;left:742px;width:63px;overflow:hidden;">Bleu</div>
<div class="t" style="top:247px;font-size:12px;line-height:17px;color:#000;letter-spacing:-0.249px;left:807px;width:143px;overflow:hidden;">CH1-Bleu-XXXL</div>
<div class="t" style="top:247px;font-size:12px;line-height:17px;color:#000;letter-spacing:0.323px;right:925.677px;text-align:right;">100000</div>
<div class="t" style="top:247px;font-size:12px;line-height:17px;color:#000;letter-spacing:0.340px;left:999px;width:179px;overflow:hidden;">monsite.com/CH1-Bleu-3.jpg</div>
<div class="t" style="top:247px;font-size:12px;line-height:17px;color:#000;right:576px;text-align:right;">6</div>
<div class="t" style="top:247px;font-size:12px;line-height:17px;color:#000;letter-spacing:0.340px;left:1349px;width:179px;overflow:hidden;">monsite.com/CH1-Bleu-1.jpg</div>
<div class="t" style="top:265px;font-size:12px;line-height:17px;color:#000;letter-spacing:-0.006px;left:536px;width:73px;overflow:hidden;">PANT2</div>
<div class="t" style="top:265px;font-size:12px;line-height:17px;color:#000;letter-spacing:0.316px;left:611px;width:52px;overflow:hidden;">Pantalon</div>
<div class="t" style="top:265px;font-size:12px;line-height:17px;color:#000;letter-spacing:0.709px;left:665px;width:75px;overflow:hidden;">S/M</div>
<div class="t" style="top:265px;font-size:12px;line-height:17px;color:#000;letter-spacing:0.192px;left:742px;width:63px;overflow:hidden;">Bleu</div>
<div class="t" style="top:265px;font-size:12px;line-height:17px;color:#000;letter-spacing:0.237px;left:807px;width:143px;overflow:hidden;">PANT2-Bleu-S/M</div>
<div class="t" style="top:265px;font-size:12px;line-height:17px;color:#000;right:926px;text-align:right;">1</div>
<div class="t" style="top:265px;font-size:12px;line-height:17px;color:#000;letter-spacing:0.352px;left:999px;width:179px;overflow:hidden;">monsite.com/PANT2-Bleu-1.jpg</div>
<div class="t" style="top:265px;font-size:12px;line-height:17px;color:#000;right:576px;text-align:right;">1</div>
<div class="t" style="top:265px;font-size:12px;line-height:17px;color:#000;letter-spacing:0.352px;left:1349px;width:179px;overflow:hidden;">monsite.com/PANT2-Bleu-1.jpg</div>
<div class="t" style="top:283px;font-size:12px;line-height:17px;color:#000;letter-spacing:-0.006px;left:536px;width:73px;overflow:hidden;">PANT2</div>
<div class="t" style="top:283px;font-size:12px;line-height:17px;color:#000;letter-spacing:0.316px;left:611px;width:52px;overflow:hidden;">Pantalon</div>
<div class="t" style="top:283px;font-size:12px;line-height:17px;color:#000;letter-spacing:-0.151px;left:665px;width:75px;overflow:hidden;">L/XL</div>
<div class="t" style="top:283px;font-size:12px;line-height:17px;color:#000;letter-spacing:0.192px;left:742px;width:63px;overflow:hidden;">Bleu</div>
<div class="t" style="top:283px;font-size:12px;line-height:17px;color:#000;letter-spacing:0.039px;left:807px;width:143px;overflow:hidden;">PANT2-Bleu-L/XL</div>
<div class="t" style="top:283px;font-size:12px;line-height:17px;color:#000;letter-spacing:0.323px;right:925.677px;text-align:right;">10</div>
<div class="t" style="top:283px;font-size:12px;line-height:17px;color:#000;letter-spacing:0.352px;left:999px;width:179px;overflow:hidden;">monsite.com/PANT2-Bleu-2.jpg</div>
<div class="t" style="top:283px;font-size:12px;line-height:17px;color:#000;right:576px;text-align:right;">2</div>
<div class="t" style="top:283px;font-size:12px;line-height:17px;color:#000;letter-spacing:0.352px;left:1349px;width:179px;overflow:hidden;">monsite.com/PANT2-Bleu-1.jpg</div>
<div class="t" style="top:301px;font-size:12px;line-height:17px;color:#000;letter-spacing:-0.006px;left:536px;width:73px;overflow:hidden;">PANT2</div>
<div class="t" style="top:301px;font-size:12px;line-height:17px;color:#000;letter-spacing:0.316px;left:611px;width:52px;overflow:hidden;">Pantalon</div>
<div class="t" style="top:301px;font-size:12px;line-height:17px;color:#000;letter-spacing:-0.381px;left:665px;width:75px;overflow:hidden;">XL/XXL</div>
<div class="t" style="top:301px;font-size:12px;line-height:17px;color:#000;letter-spacing:0.192px;left:742px;width:63px;overflow:hidden;">Bleu</div>
<div class="t" style="top:301px;font-size:12px;line-height:17px;color:#000;letter-spacing:-0.065px;left:807px;width:143px;overflow:hidden;">PANT2-Bleu-XL/XXL</div>
<div class="t" style="top:301px;font-size:12px;line-height:17px;color:#000;letter-spacing:0.323px;right:925.677px;text-align:right;">100</div>
<div class="t" style="top:301px;font-size:12px;line-height:17px;color:#000;letter-spacing:0.352px;left:999px;width:179px;overflow:hidden;">monsite.com/PANT2-Bleu-3.jpg</div>
<div class="t" style="top:301px;font-size:12px;line-height:17px;color:#000;right:576px;text-align:right;">3</div>
<div class="t" style="top:301px;font-size:12px;line-height:17px;color:#000;letter-spacing:0.352px;left:1349px;width:179px;overflow:hidden;">monsite.com/PANT2-Bleu-1.jpg</div>
<div class="t" style="top:319px;font-size:12px;line-height:17px;color:#000;letter-spacing:-0.006px;left:536px;width:73px;overflow:hidden;">PANT2</div>
<div class="t" style="top:319px;font-size:12px;line-height:17px;color:#000;letter-spacing:0.192px;left:742px;width:63px;overflow:hidden;">Bleu</div>
<div class="t" style="top:319px;font-size:12px;line-height:17px;color:#000;letter-spacing:0.352px;left:999px;width:179px;overflow:hidden;">monsite.com/PANT2-Bleu-4.jpg</div>
<div class="t" style="top:319px;font-size:12px;line-height:17px;color:#000;right:576px;text-align:right;">4</div>
<div class="t" style="top:337px;font-size:12px;line-height:17px;color:#000;letter-spacing:-0.006px;left:536px;width:73px;overflow:hidden;">PANT2</div>
<div class="t" style="top:337px;font-size:12px;line-height:17px;color:#000;letter-spacing:0.192px;left:742px;width:63px;overflow:hidden;">Bleu</div>
<div class="t" style="top:337px;font-size:12px;line-height:17px;color:#000;letter-spacing:0.352px;left:999px;width:179px;overflow:hidden;">monsite.com/PANT2-Bleu-5.jpg</div>
<div class="t" style="top:337px;font-size:12px;line-height:17px;color:#000;right:576px;text-align:right;">5</div>
<div class="t" style="top:355px;font-size:12px;line-height:17px;color:#000;letter-spacing:-0.449px;left:536px;width:73px;overflow:hidden;">RB1</div>
<div class="t" style="top:355px;font-size:12px;line-height:17px;color:#000;letter-spacing:0.049px;left:611px;width:52px;overflow:hidden;">Robe</div>
<div class="t" style="top:355px;font-size:12px;line-height:17px;color:#000;letter-spacing:0.392px;left:665px;width:75px;overflow:hidden;">Taille unique</div>
<div class="t" style="top:355px;font-size:12px;line-height:17px;color:#000;letter-spacing:0.192px;left:742px;width:63px;overflow:hidden;">Bleu</div>
<div class="t" style="top:355px;font-size:12px;line-height:17px;color:#000;letter-spacing:0.226px;left:807px;width:143px;overflow:hidden;">RB1-Bleu-Taille unique</div>
<div class="t" style="top:355px;font-size:12px;line-height:17px;color:#000;right:926px;text-align:right;">1</div>
<div class="t" style="top:355px;font-size:12px;line-height:17px;color:#000;letter-spacing:0.329px;left:999px;width:179px;overflow:hidden;">monsite.com/RB1-Bleu-1.jpg</div>
<div class="t" style="top:355px;font-size:12px;line-height:17px;color:#000;right:576px;text-align:right;">1</div>
<div class="t" style="top:355px;font-size:12px;line-height:17px;color:#000;letter-spacing:0.329px;left:1349px;width:179px;overflow:hidden;">monsite.com/RB1-Bleu-1.jpg</div>
<div class="t" style="top:373px;font-size:12px;line-height:17px;color:#000;letter-spacing:-0.449px;left:536px;width:73px;overflow:hidden;">RB1</div>
<div class="t" style="top:373px;font-size:12px;line-height:17px;color:#000;letter-spacing:0.049px;left:611px;width:52px;overflow:hidden;">Robe</div>
<div class="t" style="top:373px;font-size:12px;line-height:17px;color:#000;letter-spacing:0.392px;left:665px;width:75px;overflow:hidden;">Taille unique</div>
<div class="t" style="top:373px;font-size:12px;line-height:17px;color:#000;letter-spacing:0.021px;left:742px;width:63px;overflow:hidden;">Gris</div>
<div class="t" style="top:373px;font-size:12px;line-height:17px;color:#000;letter-spacing:0.195px;left:807px;width:143px;overflow:hidden;">RB1-Gris-Taille unique</div>
<div class="t" style="top:373px;font-size:12px;line-height:17px;color:#000;letter-spacing:0.323px;right:925.677px;text-align:right;">10</div>
<div class="t" style="top:373px;font-size:12px;line-height:17px;color:#000;letter-spacing:0.303px;left:999px;width:179px;overflow:hidden;">monsite.com/RB1-Gris-1.jpg</div>
<div class="t" style="top:373px;font-size:12px;line-height:17px;color:#000;right:576px;text-align:right;">2</div>
<div class="t" style="top:373px;font-size:12px;line-height:17px;color:#000;letter-spacing:0.303px;left:1349px;width:179px;overflow:hidden;">monsite.com/RB1-Gris-1.jpg</div>
<div class="t" style="top:391px;font-size:12px;line-height:17px;color:#000;letter-spacing:-0.449px;left:536px;width:73px;overflow:hidden;">RB1</div>
<div class="t" style="top:391px;font-size:12px;line-height:17px;color:#000;letter-spacing:0.049px;left:611px;width:52px;overflow:hidden;">Robe</div>
<div class="t" style="top:391px;font-size:12px;line-height:17px;color:#000;letter-spacing:0.392px;left:665px;width:75px;overflow:hidden;">Taille unique</div>
<div class="t" style="top:391px;font-size:12px;line-height:17px;color:#000;letter-spacing:0.004px;left:742px;width:63px;overflow:hidden;">Rouge</div>
<div class="t" style="top:391px;font-size:12px;line-height:17px;color:#000;letter-spacing:0.184px;left:807px;width:143px;overflow:hidden;">RB1-Rouge-Taille unique</div>
<div class="t" style="top:391px;font-size:12px;line-height:17px;color:#000;letter-spacing:0.323px;right:925.677px;text-align:right;">100</div>
<div class="t" style="top:391px;font-size:12px;line-height:17px;color:#000;letter-spacing:0.289px;left:999px;width:179px;overflow:hidden;">monsite.com/RB1-Rouge-1.jpg</div>
<div class="t" style="top:391px;font-size:12px;line-height:17px;color:#000;right:576px;text-align:right;">3</div>
<div class="t" style="top:391px;font-size:12px;line-height:17px;color:#000;letter-spacing:0.289px;left:1349px;width:179px;overflow:hidden;">monsite.com/RB1-Rouge-1.jpg</div>
<div class="t" style="top:409px;font-size:12px;line-height:17px;color:#000;letter-spacing:-0.449px;left:536px;width:73px;overflow:hidden;">RB1</div>
<div class="t" style="top:409px;font-size:12px;line-height:17px;color:#000;letter-spacing:0.049px;left:611px;width:52px;overflow:hidden;">Robe</div>
<div class="t" style="top:409px;font-size:12px;line-height:17px;color:#000;letter-spacing:0.392px;left:665px;width:75px;overflow:hidden;">Taille unique</div>
<div class="t" style="top:409px;font-size:12px;line-height:17px;color:#000;letter-spacing:0.698px;left:742px;width:63px;overflow:hidden;">Vert</div>
<div class="t" style="top:409px;font-size:12px;line-height:17px;color:#000;letter-spacing:0.318px;left:807px;width:143px;overflow:hidden;">RB1-Vert-Taille unique</div>
<div class="t" style="top:409px;font-size:12px;line-height:17px;color:#000;letter-spacing:0.323px;right:925.677px;text-align:right;">1000</div>
<div class="t" style="top:409px;font-size:12px;line-height:17px;color:#000;letter-spacing:0.407px;left:999px;width:179px;overflow:hidden;">monsite.com/RB1-Vert-1.jpg</div>
<div class="t" style="top:409px;font-size:12px;line-height:17px;color:#000;right:576px;text-align:right;">4</div>
<div class="t" style="top:409px;font-size:12px;line-height:17px;color:#000;letter-spacing:0.407px;left:1349px;width:179px;overflow:hidden;">monsite.com/RB1-Vert-1.jpg</div>
<div class="t" style="top:427px;font-size:12px;line-height:17px;color:#000;letter-spacing:-0.449px;left:536px;width:73px;overflow:hidden;">RB1</div>
<div class="t" style="top:427px;font-size:12px;line-height:17px;color:#000;letter-spacing:0.049px;left:611px;width:52px;overflow:hidden;">Robe</div>
<div class="t" style="top:427px;font-size:12px;line-height:17px;color:#000;letter-spacing:0.392px;left:665px;width:75px;overflow:hidden;">Taille unique</div>
<div class="t" style="top:427px;font-size:12px;line-height:17px;color:#000;letter-spacing:0.068px;left:742px;width:63px;overflow:hidden;">Blanc</div>
<div class="t" style="top:427px;font-size:12px;line-height:17px;color:#000;letter-spacing:0.198px;left:807px;width:143px;overflow:hidden;">RB1-Blanc-Taille unique</div>
<div class="t" style="top:427px;font-size:12px;line-height:17px;color:#000;letter-spacing:0.323px;right:925.677px;text-align:right;">10000</div>
<div class="t" style="top:427px;font-size:12px;line-height:17px;color:#000;letter-spacing:0.301px;left:999px;width:179px;overflow:hidden;">monsite.com/RB1-Blanc-1.jpg</div>
<div class="t" style="top:427px;font-size:12px;line-height:17px;color:#000;right:576px;text-align:right;">5</div>
<div class="t" style="top:427px;font-size:12px;line-height:17px;color:#000;letter-spacing:0.301px;left:1349px;width:179px;overflow:hidden;">monsite.com/RB1-Blanc-1.jpg</div>
<div class="t" style="top:445px;font-size:12px;line-height:17px;color:#000;letter-spacing:-0.449px;left:536px;width:73px;overflow:hidden;">RB1</div>
<div class="t" style="top:445px;font-size:12px;line-height:17px;color:#000;letter-spacing:0.049px;left:611px;width:52px;overflow:hidden;">Robe</div>
<div class="t" style="top:445px;font-size:12px;line-height:17px;color:#000;letter-spacing:0.392px;left:665px;width:75px;overflow:hidden;">Taille unique</div>
<div class="t" style="top:445px;font-size:12px;line-height:17px;color:#000;letter-spacing:0.540px;left:742px;width:63px;overflow:hidden;">Noir</div>
<div class="t" style="top:445px;font-size:12px;line-height:17px;color:#000;letter-spacing:0.289px;left:807px;width:143px;overflow:hidden;">RB1-Noir-Taille unique</div>
<div class="t" style="top:445px;font-size:12px;line-height:17px;color:#000;letter-spacing:0.323px;right:925.677px;text-align:right;">100000</div>
<div class="t" style="top:445px;font-size:12px;line-height:17px;color:#000;letter-spacing:0.382px;left:999px;width:179px;overflow:hidden;">monsite.com/RB1-Noir-1.jpg</div>
<div class="t" style="top:445px;font-size:12px;line-height:17px;color:#000;right:576px;text-align:right;">6</div>
<div class="t" style="top:445px;font-size:12px;line-height:17px;color:#000;letter-spacing:0.382px;left:1349px;width:179px;overflow:hidden;">monsite.com/RB1-Noir-1.jpg</div>
<div style="left:534px;top:515px;width:993px;height:18px;background:#70ad47;"></div>
<div style="left:534px;top:533px;width:993px;height:122px;background:#ffc000;"></div>
<div style="left:534px;top:655px;width:993px;height:90px;background:#ffff00;"></div>
<div style="left:534px;top:745px;width:993px;height:108px;background:#92d050;"></div>
<div style="left:534px;top:532px;width:993px;height:1px;background:#a9d08e;"></div>
<div style="left:534px;top:550px;width:993px;height:1px;background:#a9d08e;"></div>
<div style="left:534px;top:568px;width:993px;height:1px;background:#a9d08e;"></div>
<div style="left:534px;top:600px;width:993px;height:1px;background:#a9d08e;"></div>
<div style="left:534px;top:618px;width:993px;height:1px;background:#a9d08e;"></div>
<div style="left:534px;top:636px;width:993px;height:1px;background:#a9d08e;"></div>
<div style="left:534px;top:654px;width:993px;height:1px;background:#a9d08e;"></div>
<div style="left:534px;top:672px;width:993px;height:1px;background:#a9d08e;"></div>
<div style="left:534px;top:690px;width:993px;height:1px;background:#a9d08e;"></div>
<div style="left:534px;top:708px;width:993px;height:1px;background:#a9d08e;"></div>
<div style="left:534px;top:726px;width:993px;height:1px;background:#a9d08e;"></div>
<div style="left:534px;top:744px;width:993px;height:1px;background:#a9d08e;"></div>
<div style="left:534px;top:762px;width:993px;height:1px;background:#a9d08e;"></div>
<div style="left:534px;top:780px;width:993px;height:1px;background:#a9d08e;"></div>
<div style="left:534px;top:798px;width:993px;height:1px;background:#a9d08e;"></div>
<div style="left:534px;top:816px;width:993px;height:1px;background:#a9d08e;"></div>
<div style="left:534px;top:834px;width:993px;height:1px;background:#a9d08e;"></div>
<div style="left:534px;top:852px;width:993px;height:1px;background:#a9d08e;"></div>
<div class="t" style="top:517px;font-size:12px;line-height:17px;color:#fff;font-weight:bold;letter-spacing:0.207px;left:536px;width:112px;overflow:hidden;">référence</div>
<div class="t" style="top:517px;font-size:12px;line-height:17px;color:#fff;font-weight:bold;letter-spacing:0.367px;left:611px;width:91px;overflow:hidden;">nom</div>
<div class="t" style="top:517px;font-size:12px;line-height:17px;color:#fff;font-weight:bold;letter-spacing:0.238px;left:665px;width:114px;overflow:hidden;">Taille</div>
<div class="t" style="top:517px;font-size:12px;line-height:17px;color:#fff;font-weight:bold;letter-spacing:0.014px;left:742px;width:102px;overflow:hidden;">Couleur</div>
<div class="t" style="top:517px;font-size:12px;line-height:17px;color:#fff;font-weight:bold;letter-spacing:0.229px;left:807px;width:182px;overflow:hidden;">référence2</div>
<div class="t" style="top:517px;font-size:12px;line-height:17px;color:#fff;font-weight:bold;letter-spacing:0.365px;left:952px;width:84px;overflow:hidden;">Qty</div>
<div class="t" style="top:517px;font-size:12px;line-height:17px;color:#fff;font-weight:bold;letter-spacing:0.182px;left:999px;width:218px;overflow:hidden;">Image référence</div>
<div class="t" style="top:517px;font-size:12px;line-height:17px;color:#fff;font-weight:bold;letter-spacing:0.158px;left:1180px;width:206px;overflow:hidden;">Image référence_position</div>
<div class="t" style="top:517px;font-size:12px;line-height:17px;color:#fff;font-weight:bold;letter-spacing:0.208px;left:1349px;width:218px;overflow:hidden;">image_référence2</div>
<div class="t" style="top:535px;font-size:12px;line-height:17px;color:#000;letter-spacing:-0.352px;left:536px;width:73px;overflow:hidden;">CH1</div>
<div class="t" style="top:535px;font-size:12px;line-height:17px;color:#000;letter-spacing:0.082px;left:611px;width:52px;overflow:hidden;">Chemise</div>
<div class="t" style="top:535px;font-size:12px;line-height:17px;color:#000;left:665px;width:75px;overflow:hidden;">S</div>
<div class="t" style="top:535px;font-size:12px;line-height:17px;color:#000;letter-spacing:0.540px;left:742px;width:63px;overflow:hidden;">Noir</div>
<div class="t" style="top:535px;font-size:12px;line-height:17px;color:#000;letter-spacing:-0.011px;left:807px;width:143px;overflow:hidden;">CH1-Noir-S</div>
<div class="t" style="top:535px;font-size:12px;line-height:17px;color:#000;right:926px;text-align:right;">1</div>
<div class="t" style="top:535px;font-size:12px;line-height:17px;color:#000;letter-spacing:0.394px;left:999px;width:179px;overflow:hidden;">monsite.com/CH1-Noir-1.jpg</div>
<div class="t" style="top:535px;font-size:12px;line-height:17px;color:#000;right:576px;text-align:right;">1</div>
<div class="t" style="top:535px;font-size:12px;line-height:17px;color:#000;letter-spacing:0.394px;left:1349px;width:179px;overflow:hidden;">monsite.com/CH1-Noir-1.jpg</div>
<div class="t" style="top:553px;font-size:12px;line-height:17px;color:#000;letter-spacing:-0.352px;left:536px;width:73px;overflow:hidden;">CH1</div>
<div class="t" style="top:553px;font-size:12px;line-height:17px;color:#000;letter-spacing:0.082px;left:611px;width:52px;overflow:hidden;">Chemise</div>
<div class="t" style="top:553px;font-size:12px;line-height:17px;color:#000;left:665px;width:75px;overflow:hidden;">M</div>
<div class="t" style="top:553px;font-size:12px;line-height:17px;color:#000;letter-spacing:0.540px;left:742px;width:63px;overflow:hidden;">Noir</div>
<div class="t" style="top:553px;font-size:12px;line-height:17px;color:#000;letter-spacing:0.336px;left:807px;width:143px;overflow:hidden;">CH1-Noir-M</div>
<div class="t" style="top:553px;font-size:12px;line-height:17px;color:#000;letter-spacing:0.323px;right:925.677px;text-align:right;">10</div>
<div class="t" style="top:553px;font-size:12px;line-height:17px;color:#000;letter-spacing:0.394px;left:1349px;width:179px;overflow:hidden;">monsite.com/CH1-Noir-1.jpg</div>
<div class="t" style="top:581px;font-size:12px;line-height:17px;color:#000;letter-spacing:-0.352px;left:536px;width:73px;overflow:hidden;">CH1</div>
<div class="t" style="top:581px;font-size:12px;line-height:17px;color:#000;letter-spacing:0.082px;left:611px;width:52px;overflow:hidden;">Chemise</div>
<div class="t" style="top:581px;font-size:12px;line-height:17px;color:#000;left:665px;width:75px;overflow:hidden;">L</div>
<div class="t" style="top:581px;font-size:12px;line-height:17px;color:#000;letter-spacing:0.540px;left:742px;width:63px;overflow:hidden;">Noir</div>
<div class="t" style="top:581px;font-size:12px;line-height:17px;color:#000;letter-spacing:0.068px;left:807px;width:143px;overflow:hidden;">CH1-Noir-L</div>
<div class="t" style="top:581px;font-size:12px;line-height:17px;color:#000;letter-spacing:0.323px;right:925.677px;text-align:right;">100</div>
<div class="t" style="top:581px;font-size:12px;line-height:17px;color:#000;letter-spacing:0.394px;left:1349px;width:179px;overflow:hidden;">monsite.com/CH1-Noir-1.jpg</div>
<div class="t" style="top:603px;font-size:12px;line-height:17px;color:#000;letter-spacing:-0.352px;left:536px;width:73px;overflow:hidden;">CH1</div>
<div class="t" style="top:603px;font-size:12px;line-height:17px;color:#000;letter-spacing:0.082px;left:611px;width:52px;overflow:hidden;">Chemise</div>
<div class="t" style="top:603px;font-size:12px;line-height:17px;color:#000;letter-spacing:-0.860px;left:665px;width:75px;overflow:hidden;">XL</div>
<div class="t" style="top:603px;font-size:12px;line-height:17px;color:#000;letter-spacing:0.192px;left:742px;width:63px;overflow:hidden;">Bleu</div>
<div class="t" style="top:603px;font-size:12px;line-height:17px;color:#000;letter-spacing:-0.141px;left:807px;width:143px;overflow:hidden;">CH1-Bleu-XL</div>
<div class="t" style="top:603px;font-size:12px;line-height:17px;color:#000;letter-spacing:0.323px;right:925.677px;text-align:right;">1000</div>
<div class="t" style="top:603px;font-size:12px;line-height:17px;color:#000;letter-spacing:0.340px;left:999px;width:179px;overflow:hidden;">monsite.com/CH1-Bleu-1.jpg</div>
<div class="t" style="top:603px;font-size:12px;line-height:17px;color:#000;right:576px;text-align:right;">2</div>
<div class="t" style="top:603px;font-size:12px;line-height:17px;color:#000;letter-spacing:0.340px;left:1349px;width:179px;overflow:hidden;">monsite.com/CH1-Bleu-1.jpg</div>
<div class="t" style="top:621px;font-size:12px;line-height:17px;color:#000;letter-spacing:-0.352px;left:536px;width:73px;overflow:hidden;">CH1</div>
<div class="t" style="top:621px;font-size:12px;line-height:17px;color:#000;letter-spacing:0.082px;left:611px;width:52px;overflow:hidden;">Chemise</div>
<div class="t" style="top:621px;font-size:12px;line-height:17px;color:#000;letter-spacing:-0.854px;left:665px;width:75px;overflow:hidden;">XXL</div>
<div class="t" style="top:621px;font-size:12px;line-height:17px;color:#000;letter-spacing:0.192px;left:742px;width:63px;overflow:hidden;">Bleu</div>
<div class="t" style="top:621px;font-size:12px;line-height:17px;color:#000;letter-spacing:-0.200px;left:807px;width:143px;overflow:hidden;">CH1-Bleu-XXL</div>
<div class="t" style="top:621px;font-size:12px;line-height:17px;color:#000;letter-spacing:0.323px;right:925.677px;text-align:right;">10000</div>
<div class="t" style="top:621px;font-size:12px;line-height:17px;color:#000;letter-spacing:0.340px;left:999px;width:179px;overflow:hidden;">monsite.com/CH1-Bleu-2.jpg</div>
<div class="t" style="top:621px;font-size:12px;line-height:17px;color:#000;right:576px;text-align:right;">3</div>
<div class="t" style="top:621px;font-size:12px;line-height:17px;color:#000;letter-spacing:0.340px;left:1349px;width:179px;overflow:hidden;">monsite.com/CH1-Bleu-1.jpg</div>
<div class="t" style="top:639px;font-size:12px;line-height:17px;color:#000;letter-spacing:-0.352px;left:536px;width:73px;overflow:hidden;">CH1</div>
<div class="t" style="top:639px;font-size:12px;line-height:17px;color:#000;letter-spacing:0.082px;left:611px;width:52px;overflow:hidden;">Chemise</div>
<div class="t" style="top:639px;font-size:12px;line-height:17px;color:#000;letter-spacing:-0.851px;left:665px;width:75px;overflow:hidden;">XXXL</div>
<div class="t" style="top:639px;font-size:12px;line-height:17px;color:#000;letter-spacing:0.192px;left:742px;width:63px;overflow:hidden;">Bleu</div>
<div class="t" style="top:639px;font-size:12px;line-height:17px;color:#000;letter-spacing:-0.249px;left:807px;width:143px;overflow:hidden;">CH1-Bleu-XXXL</div>
<div class="t" style="top:639px;font-size:12px;line-height:17px;color:#000;letter-spacing:0.323px;right:925.677px;text-align:right;">100000</div>
<div class="t" style="top:639px;font-size:12px;line-height:17px;color:#000;letter-spacing:0.340px;left:1349px;width:179px;overflow:hidden;">monsite.com/CH1-Bleu-1.jpg</div>
<div class="t" style="top:657px;font-size:12px;line-height:17px;color:#000;letter-spacing:-0.006px;left:536px;width:73px;overflow:hidden;">PANT2</div>
<div class="t" style="top:657px;font-size:12px;line-height:17px;color:#000;letter-spacing:0.316px;left:611px;width:52px;overflow:hidden;">Pantalon</div>
<div class="t" style="top:657px;font-size:12px;line-height:17px;color:#000;letter-spacing:0.709px;left:665px;width:75px;overflow:hidden;">S/M</div>
<div class="t" style="top:657px;font-size:12px;line-height:17px;color:#000;letter-spacing:0.192px;left:742px;width:63px;overflow:hidden;">Bleu</div>
<div class="t" style="top:657px;font-size:12px;line-height:17px;color:#000;letter-spacing:0.237px;left:807px;width:143px;overflow:hidden;">PANT2-Bleu-S/M</div>
<div class="t" style="top:657px;font-size:12px;line-height:17px;color:#000;right:926px;text-align:right;">1</div>
<div class="t" style="top:657px;font-size:12px;line-height:17px;color:#000;letter-spacing:0.352px;left:999px;width:179px;overflow:hidden;">monsite.com/PANT2-Bleu-1.jpg</div>
<div class="t" style="top:657px;font-size:12px;line-height:17px;color:#000;right:576px;text-align:right;">1</div>
<div class="t" style="top:657px;font-size:12px;line-height:17px;color:#000;letter-spacing:0.352px;left:1349px;width:179px;overflow:hidden;">monsite.com/PANT2-Bleu-1.jpg</div>
<div class="t" style="top:675px;font-size:12px;line-height:17px;color:#000;letter-spacing:-0.006px;left:536px;width:73px;overflow:hidden;">PANT2</div>
<div class="t" style="top:675px;font-size:12px;line-height:17px;color:#000;letter-spacing:0.316px;left:611px;width:52px;overflow:hidden;">Pantalon</div>
<div class="t" style="top:675px;font-size:12px;line-height:17px;color:#000;letter-spacing:-0.151px;left:665px;width:75px;overflow:hidden;">L/XL</div>
<div class="t" style="top:675px;font-size:12px;line-height:17px;color:#000;letter-spacing:0.192px;left:742px;width:63px;overflow:hidden;">Bleu</div>
<div class="t" style="top:675px;font-size:12px;line-height:17px;color:#000;letter-spacing:0.039px;left:807px;width:143px;overflow:hidden;">PANT2-Bleu-L/XL</div>
<div class="t" style="top:675px;font-size:12px;line-height:17px;color:#000;letter-spacing:0.323px;right:925.677px;text-align:right;">10</div>
<div class="t" style="top:675px;font-size:12px;line-height:17px;color:#000;letter-spacing:0.352px;left:999px;width:179px;overflow:hidden;">monsite.com/PANT2-Bleu-2.jpg</div>
<div class="t" style="top:675px;font-size:12px;line-height:17px;color:#000;right:576px;text-align:right;">2</div>
<div class="t" style="top:675px;font-size:12px;line-height:17px;color:#000;letter-spacing:0.352px;left:1349px;width:179px;overflow:hidden;">monsite.com/PANT2-Bleu-1.jpg</div>
<div class="t" style="top:693px;font-size:12px;line-height:17px;color:#000;letter-spacing:-0.006px;left:536px;width:73px;overflow:hidden;">PANT2</div>
<div class="t" style="top:693px;font-size:12px;line-height:17px;color:#000;letter-spacing:0.316px;left:611px;width:52px;overflow:hidden;">Pantalon</div>
<div class="t" style="top:693px;font-size:12px;line-height:17px;color:#000;letter-spacing:-0.381px;left:665px;width:75px;overflow:hidden;">XL/XXL</div>
<div class="t" style="top:693px;font-size:12px;line-height:17px;color:#000;letter-spacing:0.192px;left:742px;width:63px;overflow:hidden;">Bleu</div>
<div class="t" style="top:693px;font-size:12px;line-height:17px;color:#000;letter-spacing:-0.065px;left:807px;width:143px;overflow:hidden;">PANT2-Bleu-XL/XXL</div>
<div class="t" style="top:693px;font-size:12px;line-height:17px;color:#000;letter-spacing:0.323px;right:925.677px;text-align:right;">100</div>
<div class="t" style="top:693px;font-size:12px;line-height:17px;color:#000;letter-spacing:0.352px;left:999px;width:179px;overflow:hidden;">monsite.com/PANT2-Bleu-3.jpg</div>
<div class="t" style="top:693px;font-size:12px;line-height:17px;color:#000;right:576px;text-align:right;">3</div>
<div class="t" style="top:693px;font-size:12px;line-height:17px;color:#000;letter-spacing:0.352px;left:1349px;width:179px;overflow:hidden;">monsite.com/PANT2-Bleu-1.jpg</div>
<div class="t" style="top:711px;font-size:12px;line-height:17px;color:#000;letter-spacing:-0.006px;left:536px;width:73px;overflow:hidden;">PANT2</div>
<div class="t" style="top:711px;font-size:12px;line-height:17px;color:#000;letter-spacing:0.192px;left:742px;width:63px;overflow:hidden;">Bleu</div>
<div class="t" style="top:711px;font-size:12px;line-height:17px;color:#000;letter-spacing:0.352px;left:999px;width:179px;overflow:hidden;">monsite.com/PANT2-Bleu-4.jpg</div>
<div class="t" style="top:711px;font-size:12px;line-height:17px;color:#000;right:576px;text-align:right;">4</div>
<div class="t" style="top:729px;font-size:12px;line-height:17px;color:#000;letter-spacing:-0.006px;left:536px;width:73px;overflow:hidden;">PANT2</div>
<div class="t" style="top:729px;font-size:12px;line-height:17px;color:#000;letter-spacing:0.192px;left:742px;width:63px;overflow:hidden;">Bleu</div>
<div class="t" style="top:729px;font-size:12px;line-height:17px;color:#000;letter-spacing:0.352px;left:999px;width:179px;overflow:hidden;">monsite.com/PANT2-Bleu-5.jpg</div>
<div class="t" style="top:729px;font-size:12px;line-height:17px;color:#000;right:576px;text-align:right;">5</div>
<div class="t" style="top:747px;font-size:12px;line-height:17px;color:#000;letter-spacing:-0.449px;left:536px;width:73px;overflow:hidden;">RB1</div>
<div class="t" style="top:747px;font-size:12px;line-height:17px;color:#000;letter-spacing:0.049px;left:611px;width:52px;overflow:hidden;">Robe</div>
<div class="t" style="top:747px;font-size:12px;line-height:17px;color:#000;letter-spacing:0.392px;left:665px;width:75px;overflow:hidden;">Taille unique</div>
<div class="t" style="top:747px;font-size:12px;line-height:17px;color:#000;letter-spacing:0.192px;left:742px;width:63px;overflow:hidden;">Bleu</div>
<div class="t" style="top:747px;font-size:12px;line-height:17px;color:#000;letter-spacing:0.226px;left:807px;width:143px;overflow:hidden;">RB1-Bleu-Taille unique</div>
<div class="t" style="top:747px;font-size:12px;line-height:17px;color:#000;right:926px;text-align:right;">1</div>
<div class="t" style="top:747px;font-size:12px;line-height:17px;color:#000;letter-spacing:0.329px;left:999px;width:179px;overflow:hidden;">monsite.com/RB1-Bleu-1.jpg</div>
<div class="t" style="top:747px;font-size:12px;line-height:17px;color:#000;right:576px;text-align:right;">1</div>
<div class="t" style="top:747px;font-size:12px;line-height:17px;color:#000;letter-spacing:0.329px;left:1349px;width:179px;overflow:hidden;">monsite.com/RB1-Bleu-1.jpg</div>
<div class="t" style="top:765px;font-size:12px;line-height:17px;color:#000;letter-spacing:-0.449px;left:536px;width:73px;overflow:hidden;">RB1</div>
<div class="t" style="top:765px;font-size:12px;line-height:17px;color:#000;letter-spacing:0.049px;left:611px;width:52px;overflow:hidden;">Robe</div>
<div class="t" style="top:765px;font-size:12px;line-height:17px;color:#000;letter-spacing:0.392px;left:665px;width:75px;overflow:hidden;">Taille unique</div>
<div class="t" style="top:765px;font-size:12px;line-height:17px;color:#000;letter-spacing:0.021px;left:742px;width:63px;overflow:hidden;">Gris</div>
<div class="t" style="top:765px;font-size:12px;line-height:17px;color:#000;letter-spacing:0.195px;left:807px;width:143px;overflow:hidden;">RB1-Gris-Taille unique</div>
<div class="t" style="top:765px;font-size:12px;line-height:17px;color:#000;letter-spacing:0.323px;right:925.677px;text-align:right;">10</div>
<div class="t" style="top:765px;font-size:12px;line-height:17px;color:#000;letter-spacing:0.303px;left:999px;width:179px;overflow:hidden;">monsite.com/RB1-Gris-1.jpg</div>
<div class="t" style="top:765px;font-size:12px;line-height:17px;color:#000;right:576px;text-align:right;">2</div>
<div class="t" style="top:765px;font-size:12px;line-height:17px;color:#000;letter-spacing:0.303px;left:1349px;width:179px;overflow:hidden;">monsite.com/RB1-Gris-1.jpg</div>
<div class="t" style="top:783px;font-size:12px;line-height:17px;color:#000;letter-spacing:-0.449px;left:536px;width:73px;overflow:hidden;">RB1</div>
<div class="t" style="top:783px;font-size:12px;line-height:17px;color:#000;letter-spacing:0.049px;left:611px;width:52px;overflow:hidden;">Robe</div>
<div class="t" style="top:783px;font-size:12px;line-height:17px;color:#000;letter-spacing:0.392px;left:665px;width:75px;overflow:hidden;">Taille unique</div>
<div class="t" style="top:783px;font-size:12px;line-height:17px;color:#000;letter-spacing:0.004px;left:742px;width:63px;overflow:hidden;">Rouge</div>
<div class="t" style="top:783px;font-size:12px;line-height:17px;color:#000;letter-spacing:0.184px;left:807px;width:143px;overflow:hidden;">RB1-Rouge-Taille unique</div>
<div class="t" style="top:783px;font-size:12px;line-height:17px;color:#000;letter-spacing:0.323px;right:925.677px;text-align:right;">100</div>
<div class="t" style="top:783px;font-size:12px;line-height:17px;color:#000;letter-spacing:0.289px;left:999px;width:179px;overflow:hidden;">monsite.com/RB1-Rouge-1.jpg</div>
<div class="t" style="top:783px;font-size:12px;line-height:17px;color:#000;right:576px;text-align:right;">3</div>
<div class="t" style="top:783px;font-size:12px;line-height:17px;color:#000;letter-spacing:0.289px;left:1349px;width:179px;overflow:hidden;">monsite.com/RB1-Rouge-1.jpg</div>
<div class="t" style="top:801px;font-size:12px;line-height:17px;color:#000;letter-spacing:-0.449px;left:536px;width:73px;overflow:hidden;">RB1</div>
<div class="t" style="top:801px;font-size:12px;line-height:17px;color:#000;letter-spacing:0.049px;left:611px;width:52px;overflow:hidden;">Robe</div>
<div class="t" style="top:801px;font-size:12px;line-height:17px;color:#000;letter-spacing:0.392px;left:665px;width:75px;overflow:hidden;">Taille unique</div>
<div class="t" style="top:801px;font-size:12px;line-height:17px;color:#000;letter-spacing:0.698px;left:742px;width:63px;overflow:hidden;">Vert</div>
<div class="t" style="top:801px;font-size:12px;line-height:17px;color:#000;letter-spacing:0.318px;left:807px;width:143px;overflow:hidden;">RB1-Vert-Taille unique</div>
<div class="t" style="top:801px;font-size:12px;line-height:17px;color:#000;letter-spacing:0.323px;right:925.677px;text-align:right;">1000</div>
<div class="t" style="top:801px;font-size:12px;line-height:17px;color:#000;letter-spacing:0.407px;left:999px;width:179px;overflow:hidden;">monsite.com/RB1-Vert-1.jpg</div>
<div class="t" style="top:801px;font-size:12px;line-height:17px;color:#000;right:576px;text-align:right;">4</div>
<div class="t" style="top:801px;font-size:12px;line-height:17px;color:#000;letter-spacing:0.407px;left:1349px;width:179px;overflow:hidden;">monsite.com/RB1-Vert-1.jpg</div>
<div class="t" style="top:819px;font-size:12px;line-height:17px;color:#000;letter-spacing:-0.449px;left:536px;width:73px;overflow:hidden;">RB1</div>
<div class="t" style="top:819px;font-size:12px;line-height:17px;color:#000;letter-spacing:0.049px;left:611px;width:52px;overflow:hidden;">Robe</div>
<div class="t" style="top:819px;font-size:12px;line-height:17px;color:#000;letter-spacing:0.392px;left:665px;width:75px;overflow:hidden;">Taille unique</div>
<div class="t" style="top:819px;font-size:12px;line-height:17px;color:#000;letter-spacing:0.068px;left:742px;width:63px;overflow:hidden;">Blanc</div>
<div class="t" style="top:819px;font-size:12px;line-height:17px;color:#000;letter-spacing:0.198px;left:807px;width:143px;overflow:hidden;">RB1-Blanc-Taille unique</div>
<div class="t" style="top:819px;font-size:12px;line-height:17px;color:#000;letter-spacing:0.323px;right:925.677px;text-align:right;">10000</div>
<div class="t" style="top:819px;font-size:12px;line-height:17px;color:#000;letter-spacing:0.301px;left:999px;width:179px;overflow:hidden;">monsite.com/RB1-Blanc-1.jpg</div>
<div class="t" style="top:819px;font-size:12px;line-height:17px;color:#000;right:576px;text-align:right;">5</div>
<div class="t" style="top:819px;font-size:12px;line-height:17px;color:#000;letter-spacing:0.301px;left:1349px;width:179px;overflow:hidden;">monsite.com/RB1-Blanc-1.jpg</div>
<div class="t" style="top:837px;font-size:12px;line-height:17px;color:#000;letter-spacing:-0.449px;left:536px;width:73px;overflow:hidden;">RB1</div>
<div class="t" style="top:837px;font-size:12px;line-height:17px;color:#000;letter-spacing:0.049px;left:611px;width:52px;overflow:hidden;">Robe</div>
<div class="t" style="top:837px;font-size:12px;line-height:17px;color:#000;letter-spacing:0.392px;left:665px;width:75px;overflow:hidden;">Taille unique</div>
<div class="t" style="top:837px;font-size:12px;line-height:17px;color:#000;letter-spacing:0.540px;left:742px;width:63px;overflow:hidden;">Noir</div>
<div class="t" style="top:837px;font-size:12px;line-height:17px;color:#000;letter-spacing:0.289px;left:807px;width:143px;overflow:hidden;">RB1-Noir-Taille unique</div>
<div class="t" style="top:837px;font-size:12px;line-height:17px;color:#000;letter-spacing:0.323px;right:925.677px;text-align:right;">100000</div>
<div class="t" style="top:837px;font-size:12px;line-height:17px;color:#000;letter-spacing:0.382px;left:999px;width:179px;overflow:hidden;">monsite.com/RB1-Noir-1.jpg</div>
<div class="t" style="top:837px;font-size:12px;line-height:17px;color:#000;right:576px;text-align:right;">6</div>
<div class="t" style="top:837px;font-size:12px;line-height:17px;color:#000;letter-spacing:0.382px;left:1349px;width:179px;overflow:hidden;">monsite.com/RB1-Noir-1.jpg</div>
<svg style="left:1521px;top:455px;" width="6" height="6" viewBox="0 0 6 6"><path d="M6 0v6h-6z" fill="#2f5597"/></svg>
<div class="t" style="top:178.1px;font-size:22px;line-height:31px;color:#ff0000;letter-spacing:0.351px;left:1580px;">&lt;- Version 2 (ancienne version)</div>
<div class="t" style="top:570.1px;font-size:22px;line-height:31px;color:#ff0000;letter-spacing:0.249px;left:1580px;">&lt;- Version 3</div>
<div style="left:508px;top:867px;width:1420px;height:1px;background:#8e8e8e;"></div>
<div style="left:508px;top:868px;width:1420px;height:27px;background:#e6e6e6;"></div>
<div style="left:508px;top:894px;width:1420px;height:1px;background:#c8c8c8;"></div>
<svg style="left:535px;top:876px;" width="6" height="10" viewBox="0 0 6 10"><path d="M5 0.5v9l-4.5-4.5z" fill="#c4c4c4"/></svg>
<svg style="left:563px;top:876px;" width="6" height="10" viewBox="0 0 6 10"><path d="M1 0.5v9l4.5-4.5z" fill="#c4c4c4"/></svg>
<div style="left:608px;top:871px;width:1px;height:21px;background:#ababab;"></div>
<div style="left:611px;top:870px;width:59px;height:23px;background:#ffc000;"></div>
<div class="t" style="top:870.5px;font-size:13.5px;line-height:19px;color:#000;letter-spacing:-0.253px;left:439.7px;width:400px;text-align:center;">source</div>
<div style="left:672px;top:868px;width:83px;height:25px;background:#fff;"></div>
<div style="left:672px;top:892px;width:83px;height:2px;background:#217346;"></div>
<div class="t" style="top:870.5px;font-size:13.5px;line-height:19px;color:#217346;font-weight:bold;letter-spacing:-0.226px;left:512.8px;width:400px;text-align:center;">Version 3</div>
<div style="left:757px;top:870px;width:77px;height:23px;background:#92d050;"></div>
<div class="t" style="top:870.5px;font-size:13.5px;line-height:19px;color:#222;letter-spacing:-0.032px;left:594.3px;width:400px;text-align:center;">Version 2</div>
<div style="left:836px;top:871px;width:1px;height:21px;background:#ababab;"></div>
<div class="t" style="top:870.5px;font-size:13.5px;line-height:19px;color:#444;letter-spacing:-0.032px;left:676px;width:400px;text-align:center;">Version 1</div>
<div style="left:918px;top:871px;width:1px;height:21px;background:#ababab;"></div>
<div class="t" style="top:870.5px;font-size:13.5px;line-height:19px;color:#444;letter-spacing:-0.628px;left:748.2px;width:400px;text-align:center;">Feuil1</div>
<div style="left:978px;top:871px;width:1px;height:21px;background:#ababab;"></div>
<svg style="left:1011px;top:872px;" width="17" height="17" viewBox="0 0 17 17"><circle cx="8.5" cy="8.5" r="7.5" fill="none" stroke="#666" stroke-width="1"/><path d="M4.5 8.5h8M8.5 4.5v8" stroke="#666" stroke-width="1.4"/></svg>
<div style="left:508px;top:895px;width:1420px;height:23px;background:#f3f2f1;border-radius:0 0 0 8px"></div>
<div class="t" style="top:898px;font-size:11.5px;line-height:16px;color:#444;letter-spacing:-0.398px;left:517px;">Prêt</div>
<svg style="left:579px;top:899px;" width="15" height="14" viewBox="0 0 15 14"><path d="M0.5 1.5h12v3M0.5 1.5v10.5h6" fill="none" stroke="#444" stroke-width="1"/><path d="M0.5 4h12" stroke="#444"/><path d="M2.5 7h3M2.5 9.5h3" stroke="#444" stroke-width="1"/><circle cx="10" cy="9.5" r="3.6" fill="#f3f2f1" stroke="#444"/><circle cx="10" cy="9.5" r="1.5" fill="#444"/></svg>
<div style="left:1870px;top:896px;width:40px;height:22px;background:#dcdcdc;"></div>
<svg style="left:1883px;top:900px;" width="14" height="14" viewBox="0 0 14 14"><path d="M0.5 0.5h12v12h-12zM0.5 4.5h12M0.5 8.5h12M4.5 0.5v12M8.5 0.5v12" fill="none" stroke="#444" stroke-width="1"/></svg>
<div style="left:526px;top:0px;width:12px;height:2px;background:#b9c3c9;"></div>
<div style="left:539px;top:0px;width:14px;height:4px;background:#e9e9e9;border:1px solid #b4b4b4;border-top:0"></div>
<div class="t" style="top:6.9px;font-size:12.3px;line-height:17px;color:#a8a8a8;letter-spacing:-0.354px;left:336.5px;width:400px;text-align:center;">Coller</div>
<svg style="left:532.5px;top:27.5px;" width="8" height="6" viewBox="0 0 8 6"><path d="M1 1.2l3 3l3-3" fill="none" stroke="#b4b4b4" stroke-width="1.2"/></svg>
<svg style="left:560px;top:0px;" width="18" height="14" viewBox="0 0 18 14"><path d="M1.6 0V10.6H7" fill="none" stroke="#3b3a39" stroke-width="1.2"/><path d="M7.6 0V12.4H16.4V3.2L13.4 0.2" fill="#fff" stroke="#3b3a39" stroke-width="1.2"/><path d="M12.8 0V3.6H16.4" fill="none" stroke="#3b3a39" stroke-width="1"/><path d="M10.2 7.5h4M10.2 9.5h4" stroke="#3b3a39" stroke-width="1"/></svg>
<svg style="left:582.3px;top:2.5px;" width="8" height="6" viewBox="0 0 8 6"><path d="M1 1.2l3 3l3-3" fill="none" stroke="#444" stroke-width="1.2"/></svg>
<svg style="left:560px;top:20px;" width="18" height="17" viewBox="0 0 18 17"><path d="M8.6 4.4L1.4 7.6L8 15.6L12.8 9" fill="#fff" stroke="#e8760c" stroke-width="1.3" stroke-linejoin="round"/><path d="M3.6 10.2L10.6 10.6L5.8 13.2" fill="#fde3c4" stroke="#e8760c" stroke-width="1"/><path d="M8.4 3.4l5.8 5.8" stroke="#444" stroke-width="2.2"/><path d="M15.3 1.3l1.4 1.4l-3.6 4.2l-2-2z" fill="#fff" stroke="#444" stroke-width="1"/></svg>
<div class="t" style="top:46.4px;font-size:11.5px;line-height:16px;color:#3b3a39;letter-spacing:-0.310px;left:511.5px;">Presse-papiers</div>
<svg style="left:593px;top:49px;" width="9" height="9" viewBox="0 0 9 9"><path d="M0.5 4V0.5H4M2.5 2.5l5 5M7.5 3.5v4H3.5" fill="none" stroke="#444" stroke-width="1"/></svg>
<div style="left:604px;top:0px;width:1px;height:58px;background:#c8c6c4;"></div>
<div class="t" style="top:46.4px;font-size:11.5px;line-height:16px;color:#3b3a39;letter-spacing:-0.220px;left:512px;width:400px;text-align:center;">Police</div>
<svg style="left:825px;top:49px;" width="9" height="9" viewBox="0 0 9 9"><path d="M0.5 4V0.5H4M2.5 2.5l5 5M7.5 3.5v4H3.5" fill="none" stroke="#444" stroke-width="1"/></svg>
<div style="left:836px;top:0px;width:1px;height:58px;background:#c8c6c4;"></div>
<div class="t" style="top:46.4px;font-size:11.5px;line-height:16px;color:#3b3a39;letter-spacing:0.047px;left:816px;width:400px;text-align:center;">Alignement</div>
<svg style="left:1202px;top:49px;" width="9" height="9" viewBox="0 0 9 9"><path d="M0.5 4V0.5H4M2.5 2.5l5 5M7.5 3.5v4H3.5" fill="none" stroke="#444" stroke-width="1"/></svg>
<div style="left:1213px;top:0px;width:1px;height:58px;background:#c8c6c4;"></div>
<div class="t" style="top:46.4px;font-size:11.5px;line-height:16px;color:#3b3a39;letter-spacing:0.016px;left:1083px;width:400px;text-align:center;">Nombre</div>
<svg style="left:1358px;top:49px;" width="9" height="9" viewBox="0 0 9 9"><path d="M0.5 4V0.5H4M2.5 2.5l5 5M7.5 3.5v4H3.5" fill="none" stroke="#444" stroke-width="1"/></svg>
<div style="left:1369px;top:0px;width:1px;height:58px;background:#c8c6c4;"></div>
<div class="t" style="top:46.4px;font-size:11.5px;line-height:16px;color:#3b3a39;letter-spacing:-0.386px;left:1301px;width:400px;text-align:center;">Styles</div>
<div style="left:1634px;top:0px;width:1px;height:58px;background:#c8c6c4;"></div>
<div class="t" style="top:46.4px;font-size:11.5px;line-height:16px;color:#3b3a39;letter-spacing:-0.238px;left:1515px;width:400px;text-align:center;">Cellules</div>
<div style="left:1795px;top:0px;width:1px;height:58px;background:#c8c6c4;"></div>
<div style="left:613px;top:0px;width:123px;height:1px;background:#bdbdbd;"></div>
<div style="left:738px;top:0px;width:44px;height:1px;background:#bdbdbd;"></div>
<div class="t" style="top:11.9px;font-size:14px;line-height:20px;color:#333;font-weight:bold;left:424px;width:400px;text-align:center;">G</div>
<div class="t" style="top:10.9px;font-size:16px;line-height:22px;color:#333;font-style:italic;left:448px;width:400px;text-align:center;font-family:'Liberation Serif',serif;">I</div>
<div class="t" style="top:11.9px;font-size:13.5px;line-height:19px;color:#333;left:472px;width:400px;text-align:center;text-decoration:underline;">S</div>
<svg style="left:685.5px;top:18.5px;" width="8" height="6" viewBox="0 0 8 6"><path d="M1 1.2l3 3l3-3" fill="none" stroke="#444" stroke-width="1.2"/></svg>
<div style="left:702px;top:11px;width:1px;height:21px;background:#c8c6c4;"></div>
<svg style="left:710px;top:13px;" width="15" height="16" viewBox="0 0 15 16"><path d="M0 0.5H15M0 7.5H15" stroke="#333" stroke-width="1" stroke-dasharray="1 1"/><path d="M0.5 0V14M7.5 0V14M14.5 0V14" stroke="#333" stroke-width="1" stroke-dasharray="1 1"/><path d="M0 14.5h15" stroke="#111" stroke-width="1.4"/></svg>
<svg style="left:731.5px;top:18.5px;" width="8" height="6" viewBox="0 0 8 6"><path d="M1 1.2l3 3l3-3" fill="none" stroke="#444" stroke-width="1.2"/></svg>
<div style="left:748px;top:11px;width:1px;height:21px;background:#c8c6c4;"></div>
<svg style="left:757px;top:12px;" width="16" height="13" viewBox="0 0 16 13"><path d="M6.1 3.5L1.5 7.5L6.1 11.8L11 6.3" fill="#fff" stroke="#3b3a39" stroke-width="1.1" stroke-linejoin="round" stroke-linecap="round"/><path d="M6.1 3.5L6.4 1.7C6.6 0.4 8.6 0.4 8.7 2.2L8.6 6.6" fill="none" stroke="#3b3a39" stroke-width="1.1" stroke-linecap="round"/><path d="M10.6 4.9c1.6-.6 2.6 1.4 2.1 5.6" fill="none" stroke="#1e6fc8" stroke-width="1.7" stroke-linecap="round"/></svg>
<div style="left:756px;top:25px;width:16px;height:4px;background:#ffff00;"></div>
<svg style="left:777.5px;top:18.5px;" width="8" height="6" viewBox="0 0 8 6"><path d="M1 1.2l3 3l3-3" fill="none" stroke="#444" stroke-width="1.2"/></svg>
<div class="t" style="top:7.3px;font-size:15px;line-height:21px;color:#505050;left:603.2px;width:400px;text-align:center;">A</div>
<div style="left:795px;top:25px;width:16px;height:4px;background:#ff0000;"></div>
<svg style="left:816.5px;top:18.5px;" width="8" height="6" viewBox="0 0 8 6"><path d="M1 1.2l3 3l3-3" fill="none" stroke="#444" stroke-width="1.2"/></svg>
<svg style="left:849px;top:14px;" width="14" height="14" viewBox="0 0 14 14"><path d="M0 0.5h14M0 4.5h10M0 8.5h14M0 12.5h10" stroke="#3b3a39" stroke-width="1.1" fill="none"/></svg>
<svg style="left:873px;top:14px;" width="14" height="14" viewBox="0 0 14 14"><path d="M0.0 0.5h14M2.0 4.5h10M0.0 8.5h14M2.0 12.5h10" stroke="#3b3a39" stroke-width="1.1" fill="none"/></svg>
<svg style="left:897px;top:14px;" width="14" height="14" viewBox="0 0 14 14"><path d="M0 0.5h14M4 4.5h10M0 8.5h14M4 12.5h10" stroke="#3b3a39" stroke-width="1.1" fill="none"/></svg>
<div style="left:919px;top:11px;width:1px;height:21px;background:#c8c6c4;"></div>
<svg style="left:928px;top:14px;" width="14" height="14" viewBox="0 0 14 14"><path d="M0 0.5h14M8 4.5h6M8 8.5h6M0 12.5h14" stroke="#3b3a39" stroke-width="1.1"/><path d="M0.6 6.5h5.6M3 4l-2.5 2.5l2.5 2.5" fill="none" stroke="#1e8ad6" stroke-width="1.3"/></svg>
<svg style="left:952px;top:14px;" width="14" height="14" viewBox="0 0 14 14"><path d="M0 0.5h14M8 4.5h6M8 8.5h6M0 12.5h14" stroke="#3b3a39" stroke-width="1.1"/><path d="M0 6.5h5.6M3.2 4l2.5 2.5l-2.5 2.5" fill="none" stroke="#1e8ad6" stroke-width="1.3"/></svg>
<div style="left:974px;top:0px;width:1px;height:35px;background:#c8c6c4;"></div>
<svg style="left:982px;top:13px;" width="16" height="16" viewBox="0 0 16 16"><rect x="0.6" y="0.6" width="14" height="14" fill="none" stroke="#3b3a39" stroke-width="1.2"/><path d="M7.6 0.6v2.6M7.6 12.4v2.6" stroke="#3b3a39" stroke-width="1"/><rect x="0.6" y="3.4" width="14" height="8.4" fill="#fff" stroke="#1e8ad6" stroke-width="1.1"/><path d="M2.6 7.6h10M4.8 5.2l-2.4 2.4l2.4 2.4M10.4 5.2l2.4 2.4l-2.4 2.4" fill="none" stroke="#1e8ad6" stroke-width="1.2"/></svg>
<div class="t" style="top:13.9px;font-size:12px;line-height:17px;color:#3b3a39;letter-spacing:-0.119px;left:1001.5px;">Fusionner et centrer</div>
<svg style="left:1115.5px;top:18.5px;" width="8" height="6" viewBox="0 0 8 6"><path d="M1 1.2l3 3l3-3" fill="none" stroke="#444" stroke-width="1.2"/></svg>
<div style="left:1222px;top:0px;width:141px;height:1px;background:#bdbdbd;"></div>
<svg style="left:1225px;top:16px;" width="17" height="14" viewBox="0 0 17 14"><rect x="0.6" y="0.6" width="14.6" height="8.6" fill="#fff" stroke="#333" stroke-width="1.2"/><path d="M5.6 3h-2.4v4h2.4M7.4 7V4.6a1.5 1.5 0 0 1 3 0" fill="none" stroke="#333" stroke-width="1"/><rect x="8.4" y="4.4" width="8" height="8.6" rx="2" fill="#fff" stroke="#e8760c" stroke-width="1.3"/><path d="M8.6 7.4c2 1.4 5.6 1.4 7.6 0M8.6 10c2 1.4 5.6 1.4 7.6 0" fill="none" stroke="#e8760c" stroke-width="1.1"/></svg>
<svg style="left:1246.5px;top:18.5px;" width="8" height="6" viewBox="0 0 8 6"><path d="M1 1.2l3 3l3-3" fill="none" stroke="#444" stroke-width="1.2"/></svg>
<div class="t" style="top:9.9px;font-size:17.5px;line-height:24px;color:#3b3a39;left:1072px;width:400px;text-align:center;">%</div>
<div class="t" style="top:14.4px;font-size:10px;line-height:14px;color:#6e6e6e;letter-spacing:-0.228px;left:1095.7px;width:400px;text-align:center;">000</div>
<div style="left:1311px;top:11px;width:1px;height:21px;background:#c8c6c4;"></div>
<div class="t" style="top:10px;font-size:9.5px;line-height:13px;color:#444;left:1131px;width:400px;text-align:center;">,0</div>
<div class="t" style="top:18px;font-size:9.5px;line-height:13px;color:#444;left:1127.5px;width:400px;text-align:center;">,00</div>
<svg style="left:1318px;top:12px;" width="10" height="10" viewBox="0 0 10 10"><path d="M1 5.5h8M4 2.5l-3 3l3 3" fill="none" stroke="#1e8ad6" stroke-width="1.2"/></svg>
<div class="t" style="top:10px;font-size:9.5px;line-height:13px;color:#444;left:1151.5px;width:400px;text-align:center;">,00</div>
<div class="t" style="top:18px;font-size:9.5px;line-height:13px;color:#444;left:1155px;width:400px;text-align:center;">,0</div>
<svg style="left:1342px;top:19px;" width="10" height="10" viewBox="0 0 10 10"><path d="M0.5 5.5h8M5.5 2.5l3 3l-3 3" fill="none" stroke="#1e8ad6" stroke-width="1.2"/></svg>
<div class="t" style="top:7.4px;font-size:12px;line-height:17px;color:#3b3a39;letter-spacing:0.075px;left:1224px;width:400px;text-align:center;">Mise en forme</div>
<div class="t" style="top:23.4px;font-size:12px;line-height:17px;color:#3b3a39;letter-spacing:0.258px;left:1219px;width:400px;text-align:center;">conditionnelle</div>
<svg style="left:1458.5px;top:28px;" width="8" height="6" viewBox="0 0 8 6"><path d="M1 1.2l3 3l3-3" fill="none" stroke="#444" stroke-width="1.2"/></svg>
<div class="t" style="top:7.4px;font-size:12px;line-height:17px;color:#3b3a39;letter-spacing:0.018px;left:1320px;width:400px;text-align:center;">Mettre sous forme</div>
<div class="t" style="top:23.4px;font-size:12px;line-height:17px;color:#3b3a39;letter-spacing:-0.105px;left:1315.5px;width:400px;text-align:center;">de tableau</div>
<svg style="left:1545.5px;top:28px;" width="8" height="6" viewBox="0 0 8 6"><path d="M1 1.2l3 3l3-3" fill="none" stroke="#444" stroke-width="1.2"/></svg>
<div class="t" style="top:7.4px;font-size:12px;line-height:17px;color:#3b3a39;letter-spacing:-0.262px;left:1399px;width:400px;text-align:center;">Styles de</div>
<div class="t" style="top:23.4px;font-size:12px;line-height:17px;color:#3b3a39;letter-spacing:-0.127px;left:1394px;width:400px;text-align:center;">cellules</div>
<svg style="left:1615.5px;top:28px;" width="8" height="6" viewBox="0 0 8 6"><path d="M1 1.2l3 3l3-3" fill="none" stroke="#444" stroke-width="1.2"/></svg>
<svg style="left:1513px;top:0px;" width="14" height="4" viewBox="0 0 14 4"><path d="M0.5 0Q5 5.5 13 0L9.6 0Q6 2 3.6 0Z" fill="#2b88d8"/></svg>
<svg style="left:1592px;top:0px;" width="14" height="4" viewBox="0 0 14 4"><path d="M0.5 0Q5 5.5 13 0L9.6 0Q6 2 3.6 0Z" fill="#2b88d8"/></svg>
<div class="t" style="top:7.4px;font-size:12px;line-height:17px;color:#3b3a39;letter-spacing:-0.335px;left:1463.5px;width:400px;text-align:center;">Insérer</div>
<svg style="left:1659.5px;top:28px;" width="8" height="6" viewBox="0 0 8 6"><path d="M1 1.2l3 3l3-3" fill="none" stroke="#444" stroke-width="1.2"/></svg>
<div class="t" style="top:7.4px;font-size:12px;line-height:17px;color:#3b3a39;letter-spacing:-0.039px;left:1514.5px;width:400px;text-align:center;">Supprimer</div>
<svg style="left:1710.5px;top:28px;" width="8" height="6" viewBox="0 0 8 6"><path d="M1 1.2l3 3l3-3" fill="none" stroke="#444" stroke-width="1.2"/></svg>
<div class="t" style="top:7.4px;font-size:12px;line-height:17px;color:#3b3a39;letter-spacing:-0.001px;left:1566px;width:400px;text-align:center;">Format</div>
<svg style="left:1762.5px;top:28px;" width="8" height="6" viewBox="0 0 8 6"><path d="M1 1.2l3 3l3-3" fill="none" stroke="#444" stroke-width="1.2"/></svg>
<svg style="left:1806px;top:0px;" width="18" height="11" viewBox="0 0 18 11"><path d="M1.6 0V9.4H16.4V0" fill="#fff" stroke="#333" stroke-width="1.2"/><path d="M9 0v6.6M5.8 3.6l3.2 3.2l3.2-3.2" fill="none" stroke="#1e8ad6" stroke-width="1.3"/></svg>
<div class="t" style="top:-4.2px;font-size:12.3px;line-height:17px;color:#3b3a39;letter-spacing:-0.528px;left:1826.5px;">Recopier</div>
<svg style="left:1874.5px;top:0.5px;" width="8" height="6" viewBox="0 0 8 6"><path d="M1 1.2l3 3l3-3" fill="none" stroke="#444" stroke-width="1.2"/></svg>
<svg style="left:1806px;top:17px;" width="18" height="18" viewBox="0 0 18 18"><path d="M10.4 1.6L16 7.2L6.6 16.4L1.4 11.2Z" fill="#fff" stroke="#a130a8" stroke-width="1.3" stroke-linejoin="round"/><path d="M5.6 7.2L10.6 12.4L6.6 16.4L1.4 11.2Z" fill="#d68ad8" stroke="#a130a8" stroke-width="1.1" stroke-linejoin="round"/></svg>
<div class="t" style="top:19px;font-size:12.3px;line-height:17px;color:#3b3a39;letter-spacing:-0.463px;left:1826.5px;">Effacer</div>
<svg style="left:1864.5px;top:23.5px;" width="8" height="6" viewBox="0 0 8 6"><path d="M1 1.2l3 3l3-3" fill="none" stroke="#444" stroke-width="1.2"/></svg>
<div style="left:7px;top:286px;width:475px;height:495px;background:#f3f2f1;border:1px solid #217346;border-radius:8px;overflow:hidden"></div>
<div style="left:7px;top:286px;width:475px;height:35px;background:#217346;border-radius:8px 8px 0 0"></div>
<svg style="left:29px;top:296px;" width="17" height="17" viewBox="0 0 17 17"><path d="M0.8 0.8h14.4v15.4h-12.4l-2-2z" fill="none" stroke="#fff" stroke-width="1.4"/><path d="M4 0.8v5.6h8v-5.6M4.5 16v-5.2h7v5.2" fill="none" stroke="#fff" stroke-width="1.4"/></svg>
<div class="t" style="top:293.5px;font-size:14px;line-height:20px;color:#fff;left:-134.5px;width:400px;text-align:center;">»</div>
<div class="t" style="top:295px;font-size:12.5px;line-height:18px;color:#fff;letter-spacing:-0.641px;left:90px;">Classeur...</div>
<svg style="left:171px;top:296px;" width="16" height="16" viewBox="0 0 16 16"><circle cx="10" cy="6" r="4.6" fill="none" stroke="#fff" stroke-width="1.3"/><path d="M6.8 9.4L1 15.2" stroke="#fff" stroke-width="1.3"/></svg>
<div style="left:207px;top:294px;width:80px;height:19px;background:#fff;border-radius:2px"></div>
<div class="t" style="top:294.5px;font-size:12.5px;line-height:18px;color:#217346;letter-spacing:-0.307px;left:47px;width:400px;text-align:center;">Connexion</div>
<svg style="left:313px;top:297px;" width="14" height="11" viewBox="0 0 14 11"><path d="M0.6 0.6h12.8v9.8h-12.8zM0.6 2.6h12.8" fill="none" stroke="#fff" stroke-width="1.2"/><path d="M7 9V4.5M5 6.3l2-2l2 2" fill="none" stroke="#fff" stroke-width="1.1"/></svg>
<div style="left:361px;top:302px;width:10px;height:1px;background:#fff;"></div>
<div style="left:407px;top:298px;width:10px;height:10px;background:transparent;border:1px solid #fff"></div>
<svg style="left:453px;top:298px;" width="11" height="11" viewBox="0 0 11 11"><path d="M0.5 0.5l10 10M10.5 0.5l-10 10" stroke="#fff" stroke-width="1.2"/></svg>
<div class="t" style="top:326.5px;font-size:13.5px;line-height:19px;color:#444;letter-spacing:-0.501px;left:22px;">Fichier</div>
<div class="t" style="top:326.5px;font-size:13.5px;line-height:19px;color:#262626;letter-spacing:-0.253px;left:78px;">Accu</div>
<div style="left:111px;top:327px;width:1px;height:18px;background:#d6d4d2;"></div>
<div class="t" style="top:326.5px;font-size:13.5px;line-height:19px;color:#444;letter-spacing:-0.203px;left:116px;">Inser</div>
<div style="left:149px;top:327px;width:1px;height:18px;background:#d6d4d2;"></div>
<div class="t" style="top:326.5px;font-size:13.5px;line-height:19px;color:#444;letter-spacing:-0.126px;left:154px;">Mise</div>
<div style="left:187px;top:327px;width:1px;height:18px;background:#d6d4d2;"></div>
<div class="t" style="top:326.5px;font-size:13.5px;line-height:19px;color:#444;letter-spacing:-0.624px;left:192px;">Form</div>
<div style="left:225px;top:327px;width:1px;height:18px;background:#d6d4d2;"></div>
<div class="t" style="top:326.5px;font-size:13.5px;line-height:19px;color:#444;letter-spacing:-0.065px;left:230px;">Donr</div>
<div style="left:263px;top:327px;width:1px;height:18px;background:#d6d4d2;"></div>
<div class="t" style="top:326.5px;font-size:13.5px;line-height:19px;color:#444;letter-spacing:-0.951px;left:268px;">Révis</div>
<div style="left:301px;top:327px;width:1px;height:18px;background:#d6d4d2;"></div>
<div class="t" style="top:326.5px;font-size:13.5px;line-height:19px;color:#444;letter-spacing:-0.002px;left:306px;width:32px;overflow:hidden;">Afficl</div>
<div style="left:339px;top:327px;width:1px;height:18px;background:#d6d4d2;"></div>
<div class="t" style="top:326.5px;font-size:13.5px;line-height:19px;color:#444;letter-spacing:-0.879px;left:344px;">Déve</div>
<div style="left:377px;top:327px;width:1px;height:18px;background:#d6d4d2;"></div>
<div class="t" style="top:326.5px;font-size:13.5px;line-height:19px;color:#444;letter-spacing:-0.255px;left:382px;">Aide</div>
<div style="left:415px;top:327px;width:1px;height:18px;background:#d6d4d2;"></div>
<div class="t" style="top:326.5px;font-size:13.5px;line-height:19px;color:#444;letter-spacing:-0.152px;left:420px;">Acrol</div>
<div style="left:453px;top:327px;width:1px;height:18px;background:#d6d4d2;"></div>
<div style="left:79px;top:346px;width:28px;height:3px;background:#217346;"></div>
<div style="left:457px;top:322px;width:12px;height:28px;background:#fff;border:1px solid #d0d0d0"></div>
<svg style="left:459px;top:331px;" width="6" height="8" viewBox="0 0 6 8"><path d="M1.5 1l3 3l-3 3" fill="none" stroke="#777" stroke-width="1.1"/></svg>
<div style="left:25px;top:355px;width:32px;height:31px;background:#fbfbfb;border:1px solid #dad8d6"></div>
<div style="left:85px;top:355px;width:32px;height:31px;background:#fbfbfb;border:1px solid #dad8d6"></div>
<div style="left:151px;top:355px;width:32px;height:31px;background:#fbfbfb;border:1px solid #dad8d6"></div>
<div style="left:221px;top:355px;width:32px;height:31px;background:#fbfbfb;border:1px solid #dad8d6"></div>
<div style="left:73px;top:355px;width:1px;height:88px;background:#c8c6c4;"></div>
<div style="left:127px;top:355px;width:1px;height:88px;background:#c8c6c4;"></div>
<div style="left:206px;top:355px;width:1px;height:88px;background:#c8c6c4;"></div>
<div style="left:267px;top:355px;width:1px;height:88px;background:#c8c6c4;"></div>
<svg style="left:34px;top:362px;" width="16" height="18" viewBox="0 0 16 18"><path d="M3.5 2.5h-2.5v12.5h5" fill="none" stroke="#e87d0d" stroke-width="1.3"/><path d="M9.5 2.5h2.5v4" fill="none" stroke="#e87d0d" stroke-width="1.3"/><path d="M4 3.5v-1.5h1.5v-1.2h2.5v1.2h1.5v1.5z" fill="none" stroke="#666" stroke-width="1"/><rect x="7.8" y="7.8" width="6.4" height="8.4" fill="#fff" stroke="#444" stroke-width="1.2"/></svg>
<div class="t" style="top:358.3px;font-size:14px;line-height:20px;color:#444;left:-99px;width:400px;text-align:center;">A</div>
<div style="left:93px;top:374px;width:16px;height:4px;background:#222;"></div>
<svg style="left:160px;top:362px;" width="15" height="15" viewBox="0 0 15 15"><path d="M0 1.5h14M2 5.5h10M0 9.5h14M2 13.5h10" stroke="#444" stroke-width="1"/></svg>
<div class="t" style="top:359px;font-size:17.5px;line-height:24px;color:#3b3a39;left:37px;width:400px;text-align:center;">%</div>
<div class="t" style="top:389px;font-size:13px;line-height:18px;color:#3b3a39;letter-spacing:-1.113px;left:-159px;width:400px;text-align:center;">Presse-</div>
<div class="t" style="top:405px;font-size:13px;line-height:18px;color:#3b3a39;letter-spacing:-0.663px;left:-164.8px;width:400px;text-align:center;">papiers</div>
<svg style="left:56px;top:411px;" width="8" height="6" viewBox="0 0 8 6"><path d="M1 1.2l3 3l3-3" fill="none" stroke="#444" stroke-width="1.1"/></svg>
<div class="t" style="top:389px;font-size:13px;line-height:18px;color:#3b3a39;letter-spacing:-0.568px;left:-99px;width:400px;text-align:center;">Police</div>
<svg style="left:97px;top:411px;" width="8" height="6" viewBox="0 0 8 6"><path d="M1 1.2l3 3l3-3" fill="none" stroke="#444" stroke-width="1.1"/></svg>
<div class="t" style="top:389px;font-size:13px;line-height:18px;color:#3b3a39;letter-spacing:-0.304px;left:-33px;width:400px;text-align:center;">Alignement</div>
<svg style="left:163px;top:411px;" width="8" height="6" viewBox="0 0 8 6"><path d="M1 1.2l3 3l3-3" fill="none" stroke="#444" stroke-width="1.1"/></svg>
<div class="t" style="top:389px;font-size:13px;line-height:18px;color:#3b3a39;letter-spacing:-0.373px;left:37px;width:400px;text-align:center;">Nombre</div>
<svg style="left:233px;top:411px;" width="8" height="6" viewBox="0 0 8 6"><path d="M1 1.2l3 3l3-3" fill="none" stroke="#444" stroke-width="1.1"/></svg>
<div class="t" style="top:357px;font-size:13px;line-height:18px;color:#3b3a39;letter-spacing:-0.356px;left:298px;width:146px;overflow:hidden;">Mise en forme conditionnelle</div>
<div class="t" style="top:380px;font-size:13px;line-height:18px;color:#3b3a39;letter-spacing:-0.646px;left:298px;width:145px;overflow:hidden;">Mettre sous forme de tableau</div>
<div class="t" style="top:403px;font-size:13px;line-height:18px;color:#3b3a39;letter-spacing:-0.691px;left:298px;">Styles de cellules</div>
<svg style="left:388px;top:409px;" width="8" height="6" viewBox="0 0 8 6"><path d="M1 1.2l3 3l3-3" fill="none" stroke="#444" stroke-width="1.1"/></svg>
<div class="t" style="top:430.5px;font-size:11.5px;line-height:16px;color:#3b3a39;letter-spacing:-0.386px;left:172px;width:400px;text-align:center;">Styles</div>
<svg style="left:279px;top:358px;" width="17" height="15" viewBox="0 0 17 15"><rect x="0.5" y="0.5" width="15" height="13" fill="#fff" stroke="#3b3a39"/><path d="M0.5 5h15M0.5 9.5h15M3.5 0.5v13M12.5 0.5v13" stroke="#3b3a39" stroke-width="1"/><rect x="3.5" y="0.5" width="5.5" height="4.5" fill="#f7a3a9" stroke="#e0191b"/><rect x="3.5" y="5" width="3" height="4.5" fill="#5aa5e8" stroke="#1467c4"/><rect x="3.5" y="9.5" width="7.5" height="4" fill="#f7a3a9" stroke="#e0191b"/></svg>
<svg style="left:279px;top:381px;" width="17" height="15" viewBox="0 0 17 15"><rect x="0.5" y="0.5" width="15" height="13" fill="#fff" stroke="#3b3a39"/><path d="M0.5 4.5h15M0.5 9h15M5.5 0.5v13M10.5 0.5v13" stroke="#3b3a39" stroke-width="1"/><rect x="5.5" y="4.5" width="10" height="9" fill="#7db9ee" stroke="#1e78d0"/><path d="M15.4 4.4L8.6 11.2" stroke="#f3f2f1" stroke-width="3.6"/><path d="M15.4 4.4L8.6 11.2" stroke="#444" stroke-width="2.2"/><path d="M15 4.8L9.4 10.4" stroke="#fff" stroke-width="0.7"/><path d="M8.6 9.8c-2 .2-2.2 2.4-4.8 3.4c2.6 1 5.8 .4 6.4-2z" fill="#1e78d0"/></svg>
<svg style="left:279px;top:404px;" width="17" height="15" viewBox="0 0 17 15"><rect x="0.5" y="0.5" width="15" height="13" fill="#fff" stroke="#3b3a39"/><path d="M0.5 3.5h15M3.5 0.5v13" stroke="#3b3a39" stroke-width="1"/><rect x="3.5" y="3.5" width="9.5" height="8" fill="#7db9ee" stroke="#1e78d0"/><path d="M15.4 4.4L8.6 11.2" stroke="#f3f2f1" stroke-width="3.6"/><path d="M15.4 4.4L8.6 11.2" stroke="#444" stroke-width="2.2"/><path d="M15 4.8L9.4 10.4" stroke="#fff" stroke-width="0.7"/><path d="M8.6 9.8c-2 .2-2.2 2.4-4.8 3.4c2.6 1 5.8 .4 6.4-2z" fill="#1e78d0"/></svg>
<div style="left:443px;top:351px;width:13px;height:97px;background:#fff;border:1px solid #d0d0d0"></div>
<svg style="left:446px;top:395px;" width="6" height="8" viewBox="0 0 6 8"><path d="M1.5 1l3 3l-3 3" fill="none" stroke="#777" stroke-width="1.1"/></svg>
<svg style="left:462px;top:436px;" width="10" height="7" viewBox="0 0 10 7"><path d="M1 5.5l4-4l4 4" fill="none" stroke="#444" stroke-width="1.2"/></svg>
<div style="left:8px;top:447px;width:473px;height:47px;background:#e6e6e6;"></div>
<div style="left:8px;top:447px;width:473px;height:5px;background:linear-gradient(#d2d2d2,#e6e6e6)"></div>
<div style="left:13px;top:458px;width:102px;height:26px;background:#fff;border:1px solid #c6c6c6"></div>
<div class="t" style="top:462.5px;font-size:12.5px;line-height:18px;color:#222;left:20px;">F11</div>
<svg style="left:100px;top:469px;" width="8" height="5" viewBox="0 0 8 5"><path d="M0.3 0.3h7.4l-3.7 3.9z" fill="#666"/></svg>
<div style="left:129px;top:466px;width:2px;height:2px;background:#b0b0b0;"></div>
<div style="left:129px;top:471px;width:2px;height:2px;background:#b0b0b0;"></div>
<div style="left:129px;top:476px;width:2px;height:2px;background:#b0b0b0;"></div>
<div style="left:145px;top:458px;width:110px;height:26px;background:#fff;border:1px solid #c6c6c6"></div>
<svg style="left:158px;top:465px;" width="12" height="12" viewBox="0 0 12 12"><path d="M1.5 1.5l9 9M10.5 1.5l-9 9" stroke="#b4b4b4" stroke-width="1.6" fill="none"/></svg>
<svg style="left:193px;top:465px;" width="14" height="12" viewBox="0 0 14 12"><path d="M1.5 6.5l3.5 4l7.5-9" stroke="#b4b4b4" stroke-width="2" fill="none"/></svg>
<div class="t" style="top:461px;font-size:14.5px;line-height:20px;color:#444;font-weight:bold;font-style:italic;left:230px;font-family:'Liberation Serif',serif;">f</div>
<div class="t" style="top:466.5px;font-size:10px;line-height:14px;color:#444;font-weight:bold;font-style:italic;left:235.5px;font-family:'Liberation Serif',serif;">x</div>
<div style="left:258px;top:458px;width:218px;height:26px;background:#fff;border:1px solid #c6c6c6"></div>
<svg style="left:461px;top:468px;" width="10" height="7" viewBox="0 0 10 7"><path d="M1 1.2l4 4l4-4" fill="none" stroke="#333" stroke-width="1.6"/></svg>
<div style="left:8px;top:494px;width:452px;height:20px;background:#e6e6e6;"></div>
<div style="left:434px;top:494px;width:26px;height:19px;background:#d2d2d2;"></div>
<div style="left:434px;top:512px;width:26px;height:2px;background:#217346;"></div>
<div style="left:8px;top:513px;width:426px;height:1px;background:#9b9b9b;"></div>
<div style="left:34px;top:514px;width:426px;height:216px;background:#fff;"></div>
<div style="left:8px;top:514px;width:25px;height:216px;background:#e6e6e6;"></div>
<div style="left:33px;top:514px;width:1px;height:216px;background:#9b9b9b;"></div>
<svg style="left:18px;top:498px;" width="13" height="13" viewBox="0 0 13 13"><path d="M12 1v11h-11z" fill="#b2b2b2"/></svg>
<div style="left:33px;top:496px;width:1px;height:17px;background:#c3c3c3;"></div>
<div class="t" style="top:495px;font-size:13.2px;line-height:18px;color:#222;left:-126.5px;width:400px;text-align:center;">A</div>
<div style="left:113px;top:496px;width:1px;height:17px;background:#c3c3c3;"></div>
<div class="t" style="top:495px;font-size:13.2px;line-height:18px;color:#222;left:-46.5px;width:400px;text-align:center;">B</div>
<div style="left:193px;top:496px;width:1px;height:17px;background:#c3c3c3;"></div>
<div class="t" style="top:495px;font-size:13.2px;line-height:18px;color:#222;left:33.5px;width:400px;text-align:center;">C</div>
<div style="left:273px;top:496px;width:1px;height:17px;background:#c3c3c3;"></div>
<div class="t" style="top:495px;font-size:13.2px;line-height:18px;color:#222;left:113.5px;width:400px;text-align:center;">D</div>
<div style="left:353px;top:496px;width:1px;height:17px;background:#c3c3c3;"></div>
<div class="t" style="top:495px;font-size:13.2px;line-height:18px;color:#222;left:193.5px;width:400px;text-align:center;">E</div>
<div style="left:433px;top:496px;width:1px;height:17px;background:#c3c3c3;"></div>
<div style="left:113px;top:514px;width:1px;height:216px;background:#d6d6d6;"></div>
<div style="left:193px;top:514px;width:1px;height:216px;background:#d6d6d6;"></div>
<div style="left:273px;top:514px;width:1px;height:216px;background:#d6d6d6;"></div>
<div style="left:353px;top:514px;width:1px;height:216px;background:#d6d6d6;"></div>
<div style="left:433px;top:514px;width:1px;height:216px;background:#d6d6d6;"></div>
<div style="left:459px;top:514px;width:1px;height:216px;background:#d6d6d6;"></div>
<div style="left:34px;top:533px;width:426px;height:1px;background:#d6d6d6;"></div>
<div style="left:8px;top:533px;width:25px;height:1px;background:#c3c3c3;"></div>
<div class="t" style="top:515.5px;font-size:13.2px;line-height:18px;color:#222;left:-179.5px;width:400px;text-align:center;">1</div>
<div style="left:34px;top:553px;width:426px;height:1px;background:#d6d6d6;"></div>
<div style="left:8px;top:553px;width:25px;height:1px;background:#c3c3c3;"></div>
<div class="t" style="top:535.5px;font-size:13.2px;line-height:18px;color:#222;left:-179.5px;width:400px;text-align:center;">2</div>
<div style="left:34px;top:573px;width:426px;height:1px;background:#d6d6d6;"></div>
<div style="left:8px;top:573px;width:25px;height:1px;background:#c3c3c3;"></div>
<div class="t" style="top:555.5px;font-size:13.2px;line-height:18px;color:#222;left:-179.5px;width:400px;text-align:center;">3</div>
<div style="left:34px;top:593px;width:426px;height:1px;background:#d6d6d6;"></div>
<div style="left:8px;top:593px;width:25px;height:1px;background:#c3c3c3;"></div>
<div class="t" style="top:575.5px;font-size:13.2px;line-height:18px;color:#222;left:-179.5px;width:400px;text-align:center;">4</div>
<div style="left:34px;top:613px;width:426px;height:1px;background:#d6d6d6;"></div>
<div style="left:8px;top:613px;width:25px;height:1px;background:#c3c3c3;"></div>
<div class="t" style="top:595.5px;font-size:13.2px;line-height:18px;color:#222;left:-179.5px;width:400px;text-align:center;">5</div>
<div style="left:34px;top:633px;width:426px;height:1px;background:#d6d6d6;"></div>
<div style="left:8px;top:633px;width:25px;height:1px;background:#c3c3c3;"></div>
<div class="t" style="top:615.5px;font-size:13.2px;line-height:18px;color:#222;left:-179.5px;width:400px;text-align:center;">6</div>
<div style="left:34px;top:653px;width:426px;height:1px;background:#d6d6d6;"></div>
<div style="left:8px;top:653px;width:25px;height:1px;background:#c3c3c3;"></div>
<div class="t" style="top:635.5px;font-size:13.2px;line-height:18px;color:#222;left:-179.5px;width:400px;text-align:center;">7</div>
<div style="left:34px;top:673px;width:426px;height:1px;background:#d6d6d6;"></div>
<div style="left:8px;top:673px;width:25px;height:1px;background:#c3c3c3;"></div>
<div class="t" style="top:655.5px;font-size:13.2px;line-height:18px;color:#222;left:-179.5px;width:400px;text-align:center;">8</div>
<div style="left:34px;top:693px;width:426px;height:1px;background:#d6d6d6;"></div>
<div style="left:8px;top:693px;width:25px;height:1px;background:#c3c3c3;"></div>
<div class="t" style="top:675.5px;font-size:13.2px;line-height:18px;color:#222;left:-179.5px;width:400px;text-align:center;">9</div>
<div style="left:34px;top:713px;width:426px;height:1px;background:#d6d6d6;"></div>
<div style="left:8px;top:713px;width:25px;height:1px;background:#c3c3c3;"></div>
<div class="t" style="top:695.5px;font-size:13.2px;line-height:18px;color:#222;left:-179.5px;width:400px;text-align:center;">10</div>
<div style="left:8px;top:714px;width:25px;height:16px;background:#d2d2d2;"></div>
<div style="left:32px;top:714px;width:2px;height:16px;background:#217346;"></div>
<div class="t" style="top:715.5px;font-size:13.2px;line-height:18px;color:#217346;left:-179.5px;width:400px;text-align:center;clip-path:inset(0 0 5px 0);">11</div>
<div style="left:34px;top:514px;width:400px;height:20px;background:#d9d9d9;"></div>
<div style="left:34px;top:534px;width:400px;height:40px;background:#ffc000;"></div>
<div style="left:34px;top:574px;width:400px;height:20px;background:#ffff00;"></div>
<div style="left:34px;top:594px;width:400px;height:120px;background:#92d050;"></div>
<div class="t" style="top:515.5px;font-size:13.2px;line-height:18px;color:#000;letter-spacing:0.507px;left:36px;width:60px;overflow:hidden;">référence</div>
<div style="left:96px;top:516px;width:17px;height:16px;background:#fbfbfb;border:1px solid #b8b8b8"></div>
<svg style="left:100px;top:522px;" width="8" height="5" viewBox="0 0 8 5"><path d="M0 0h8l-4 4.5z" fill="#555"/></svg>
<div class="t" style="top:515.5px;font-size:13.2px;line-height:18px;color:#000;letter-spacing:0.881px;left:116px;width:60px;overflow:hidden;">nom</div>
<div style="left:176px;top:516px;width:17px;height:16px;background:#fbfbfb;border:1px solid #b8b8b8"></div>
<svg style="left:180px;top:522px;" width="8" height="5" viewBox="0 0 8 5"><path d="M0 0h8l-4 4.5z" fill="#555"/></svg>
<div class="t" style="top:515.5px;font-size:13.2px;line-height:18px;color:#000;letter-spacing:0.360px;left:196px;width:60px;overflow:hidden;">Couleur</div>
<div style="left:256px;top:516px;width:17px;height:16px;background:#fbfbfb;border:1px solid #b8b8b8"></div>
<svg style="left:260px;top:522px;" width="8" height="5" viewBox="0 0 8 5"><path d="M0 0h8l-4 4.5z" fill="#555"/></svg>
<div class="t" style="top:515.5px;font-size:13.2px;line-height:18px;color:#000;letter-spacing:0.636px;left:276px;width:60px;overflow:hidden;">taille_quantité</div>
<div style="left:336px;top:516px;width:17px;height:16px;background:#fbfbfb;border:1px solid #b8b8b8"></div>
<svg style="left:340px;top:522px;" width="8" height="5" viewBox="0 0 8 5"><path d="M0 0h8l-4 4.5z" fill="#555"/></svg>
<div class="t" style="top:515.5px;font-size:13.2px;line-height:18px;color:#000;letter-spacing:0.632px;left:356px;width:60px;overflow:hidden;">qty_img</div>
<div style="left:416px;top:516px;width:17px;height:16px;background:#fbfbfb;border:1px solid #b8b8b8"></div>
<svg style="left:420px;top:522px;" width="8" height="5" viewBox="0 0 8 5"><path d="M0 0h8l-4 4.5z" fill="#555"/></svg>
<div class="t" style="top:535.5px;font-size:13.2px;line-height:18px;color:#000;letter-spacing:-0.321px;left:36px;width:77px;overflow:hidden;">CH1</div>
<div class="t" style="top:535.5px;font-size:13.2px;line-height:18px;color:#000;letter-spacing:0.150px;left:116px;width:77px;overflow:hidden;">Chemise</div>
<div class="t" style="top:535.5px;font-size:13.2px;line-height:18px;color:#000;letter-spacing:0.647px;left:196px;width:77px;overflow:hidden;">Noir</div>
<div class="t" style="top:536.5px;font-size:12px;line-height:17px;color:#000;letter-spacing:0.259px;left:276px;width:77px;overflow:hidden;">1S 10M 100L</div>
<div class="t" style="top:535.5px;font-size:13.2px;line-height:18px;color:#000;right:1490px;text-align:right;">1</div>
<div class="t" style="top:555.5px;font-size:13.2px;line-height:18px;color:#000;letter-spacing:-0.321px;left:36px;width:77px;overflow:hidden;">CH1</div>
<div class="t" style="top:555.5px;font-size:13.2px;line-height:18px;color:#000;letter-spacing:0.150px;left:116px;width:77px;overflow:hidden;">Chemise</div>
<div class="t" style="top:555.5px;font-size:13.2px;line-height:18px;color:#000;letter-spacing:0.265px;left:196px;width:77px;overflow:hidden;">Bleu</div>
<div class="t" style="top:556.5px;font-size:12px;line-height:17px;color:#000;letter-spacing:0.115px;left:276px;width:77px;overflow:hidden;">1000XL 10000XXL</div>
<div class="t" style="top:555.5px;font-size:13.2px;line-height:18px;color:#000;right:1490px;text-align:right;">2</div>
<div class="t" style="top:575.5px;font-size:13.2px;line-height:18px;color:#000;letter-spacing:0.059px;left:36px;width:77px;overflow:hidden;">PANT2</div>
<div class="t" style="top:575.5px;font-size:13.2px;line-height:18px;color:#000;letter-spacing:0.402px;left:116px;width:77px;overflow:hidden;">Pantalon</div>
<div class="t" style="top:575.5px;font-size:13.2px;line-height:18px;color:#000;letter-spacing:0.265px;left:196px;width:77px;overflow:hidden;">Bleu</div>
<div class="t" style="top:576.5px;font-size:12px;line-height:17px;color:#000;letter-spacing:0.396px;left:276px;width:77px;overflow:hidden;">1S/M 10L/XL</div>
<div class="t" style="top:575.5px;font-size:13.2px;line-height:18px;color:#000;right:1490px;text-align:right;">5</div>
<div class="t" style="top:595.5px;font-size:13.2px;line-height:18px;color:#000;letter-spacing:-0.430px;left:36px;width:77px;overflow:hidden;">RB1</div>
<div class="t" style="top:595.5px;font-size:13.2px;line-height:18px;color:#000;letter-spacing:0.117px;left:116px;width:77px;overflow:hidden;">Robe</div>
<div class="t" style="top:595.5px;font-size:13.2px;line-height:18px;color:#000;letter-spacing:0.265px;left:196px;width:77px;overflow:hidden;">Bleu</div>
<div class="t" style="top:596.5px;font-size:12px;line-height:17px;color:#000;letter-spacing:0.187px;left:276px;width:77px;overflow:hidden;">1TU</div>
<div class="t" style="top:595.5px;font-size:13.2px;line-height:18px;color:#000;right:1490px;text-align:right;">1</div>
<div class="t" style="top:615.5px;font-size:13.2px;line-height:18px;color:#000;letter-spacing:-0.430px;left:36px;width:77px;overflow:hidden;">RB1</div>
<div class="t" style="top:615.5px;font-size:13.2px;line-height:18px;color:#000;letter-spacing:0.117px;left:116px;width:77px;overflow:hidden;">Robe</div>
<div class="t" style="top:615.5px;font-size:13.2px;line-height:18px;color:#000;letter-spacing:0.071px;left:196px;width:77px;overflow:hidden;">Gris</div>
<div class="t" style="top:616.5px;font-size:12px;line-height:17px;color:#000;letter-spacing:0.272px;left:276px;width:77px;overflow:hidden;">10TU</div>
<div class="t" style="top:615.5px;font-size:13.2px;line-height:18px;color:#000;right:1490px;text-align:right;">1</div>
<div class="t" style="top:635.5px;font-size:13.2px;line-height:18px;color:#000;letter-spacing:-0.430px;left:36px;width:77px;overflow:hidden;">RB1</div>
<div class="t" style="top:635.5px;font-size:13.2px;line-height:18px;color:#000;letter-spacing:0.117px;left:116px;width:77px;overflow:hidden;">Robe</div>
<div class="t" style="top:635.5px;font-size:13.2px;line-height:18px;color:#000;letter-spacing:0.066px;left:196px;width:77px;overflow:hidden;">Rouge</div>
<div class="t" style="top:636.5px;font-size:12px;line-height:17px;color:#000;letter-spacing:0.322px;left:276px;width:77px;overflow:hidden;">100TU</div>
<div class="t" style="top:635.5px;font-size:13.2px;line-height:18px;color:#000;right:1490px;text-align:right;">1</div>
<div class="t" style="top:655.5px;font-size:13.2px;line-height:18px;color:#000;letter-spacing:-0.430px;left:36px;width:77px;overflow:hidden;">RB1</div>
<div class="t" style="top:655.5px;font-size:13.2px;line-height:18px;color:#000;letter-spacing:0.117px;left:116px;width:77px;overflow:hidden;">Robe</div>
<div class="t" style="top:655.5px;font-size:13.2px;line-height:18px;color:#000;letter-spacing:0.820px;left:196px;width:77px;overflow:hidden;">Vert</div>
<div class="t" style="top:656.5px;font-size:12px;line-height:17px;color:#000;letter-spacing:0.356px;left:276px;width:77px;overflow:hidden;">1000TU</div>
<div class="t" style="top:655.5px;font-size:13.2px;line-height:18px;color:#000;right:1490px;text-align:right;">1</div>
<div class="t" style="top:675.5px;font-size:13.2px;line-height:18px;color:#000;letter-spacing:-0.430px;left:36px;width:77px;overflow:hidden;">RB1</div>
<div class="t" style="top:675.5px;font-size:13.2px;line-height:18px;color:#000;letter-spacing:0.117px;left:116px;width:77px;overflow:hidden;">Robe</div>
<div class="t" style="top:675.5px;font-size:13.2px;line-height:18px;color:#000;letter-spacing:0.128px;left:196px;width:77px;overflow:hidden;">Blanc</div>
<div class="t" style="top:676.5px;font-size:12px;line-height:17px;color:#000;letter-spacing:0.380px;left:276px;width:77px;overflow:hidden;">10000TU</div>
<div class="t" style="top:675.5px;font-size:13.2px;line-height:18px;color:#000;right:1490px;text-align:right;">1</div>
<div class="t" style="top:695.5px;font-size:13.2px;line-height:18px;color:#000;letter-spacing:-0.430px;left:36px;width:77px;overflow:hidden;">RB1</div>
<div class="t" style="top:695.5px;font-size:13.2px;line-height:18px;color:#000;letter-spacing:0.117px;left:116px;width:77px;overflow:hidden;">Robe</div>
<div class="t" style="top:695.5px;font-size:13.2px;line-height:18px;color:#000;letter-spacing:0.647px;left:196px;width:77px;overflow:hidden;">Noir</div>
<div class="t" style="top:696.5px;font-size:12px;line-height:17px;color:#000;letter-spacing:0.399px;left:276px;width:77px;overflow:hidden;">100000TU</div>
<div class="t" style="top:695.5px;font-size:13.2px;line-height:18px;color:#000;right:1490px;text-align:right;">1</div>
<div style="left:432px;top:713px;width:28px;height:2px;background:#217346;"></div>
<div style="left:432px;top:713px;width:2px;height:17px;background:#217346;"></div>
<svg style="left:428px;top:708px;" width="6" height="6" viewBox="0 0 6 6"><path d="M6 0v6h-6z" fill="#2f5597"/></svg>
<div style="left:460px;top:494px;width:21px;height:237px;background:#e6e6e6;"></div>
<div style="left:463px;top:496px;width:15px;height:14px;background:#fff;border:1px solid #c9c9c9"></div>
<svg style="left:467px;top:500px;" width="8" height="5" viewBox="0 0 8 5"><path d="M0 4.5h8l-4-4.5z" fill="#666"/></svg>
<div style="left:463px;top:512px;width:15px;height:203px;background:#dcdcdc;"></div>
<div style="left:463px;top:512px;width:15px;height:100px;background:#fff;border:1px solid #c9c9c9"></div>
<div style="left:463px;top:716px;width:15px;height:15px;background:#fff;border:1px solid #c9c9c9"></div>
<svg style="left:467px;top:721px;" width="8" height="5" viewBox="0 0 8 5"><path d="M0 0h8l-4 4.5z" fill="#666"/></svg>
<div style="left:8px;top:730px;width:452px;height:1px;background:#8e8e8e;"></div>
<div style="left:8px;top:731px;width:473px;height:27px;background:#e6e6e6;"></div>
<div style="left:8px;top:758px;width:473px;height:1px;background:#c8c8c8;"></div>
<svg style="left:35px;top:738px;" width="6" height="10" viewBox="0 0 6 10"><path d="M5 0.5v9l-4.5-4.5z" fill="#c4c4c4"/></svg>
<svg style="left:63px;top:738px;" width="6" height="10" viewBox="0 0 6 10"><path d="M1 0.5v9l4.5-4.5z" fill="#c4c4c4"/></svg>
<div style="left:108px;top:730px;width:65px;height:24px;background:#fff;"></div>
<div style="left:108px;top:753px;width:65px;height:2px;background:#217346;"></div>
<div class="t" style="top:733.5px;font-size:13.5px;line-height:19px;color:#217346;font-weight:bold;letter-spacing:-0.795px;left:-59.5px;width:400px;text-align:center;">Source</div>
<svg style="left:205px;top:735px;" width="18" height="18" viewBox="0 0 18 18"><circle cx="9" cy="9" r="7.5" fill="none" stroke="#666" stroke-width="1"/><path d="M5 9h8M9 5v8" stroke="#666" stroke-width="1.4"/></svg>
<div style="left:292px;top:740px;width:2px;height:2px;background:#b0b0b0;"></div>
<div style="left:292px;top:744px;width:2px;height:2px;background:#b0b0b0;"></div>
<div style="left:292px;top:748px;width:2px;height:2px;background:#b0b0b0;"></div>
<div style="left:309px;top:737px;width:151px;height:15px;background:#dcdcdc;"></div>
<div style="left:309px;top:737px;width:15px;height:15px;background:#fff;border:1px solid #c9c9c9"></div>
<svg style="left:314px;top:740px;" width="5" height="8" viewBox="0 0 5 8"><path d="M4.5 0v8l-4.5-4z" fill="#555"/></svg>
<div style="left:324px;top:737px;width:75px;height:15px;background:#fff;border:1px solid #c9c9c9"></div>
<div style="left:445px;top:737px;width:15px;height:15px;background:#fff;border:1px solid #c9c9c9"></div>
<svg style="left:450px;top:740px;" width="5" height="8" viewBox="0 0 5 8"><path d="M0.5 0v8l4.5-4z" fill="#555"/></svg>
<div style="left:8px;top:759px;width:473px;height:21px;background:#f3f2f1;border-radius:0 0 8px 8px"></div>
<div class="t" style="top:761px;font-size:11.5px;line-height:16px;color:#444;letter-spacing:-0.398px;left:17px;">Prêt</div>
<svg style="left:79px;top:762px;" width="15" height="14" viewBox="0 0 15 14"><path d="M0.5 1.5h12v3M0.5 1.5v10.5h6" fill="none" stroke="#444" stroke-width="1"/><path d="M0.5 4h12" stroke="#444"/><path d="M2.5 7h3M2.5 9.5h3" stroke="#444" stroke-width="1"/><circle cx="10" cy="9.5" r="3.6" fill="#f3f2f1" stroke="#444"/><circle cx="10" cy="9.5" r="1.5" fill="#444"/></svg>
<div style="left:167px;top:759px;width:40px;height:21px;background:#d2d2d2;"></div>
<svg style="left:180px;top:762px;" width="14" height="14" viewBox="0 0 14 14"><path d="M0.5 0.5h12v12h-12zM0.5 4.5h12M0.5 8.5h12M4.5 0.5v12M8.5 0.5v12" fill="none" stroke="#444" stroke-width="1"/></svg>
<svg style="left:220px;top:762px;" width="15" height="14" viewBox="0 0 15 14"><path d="M0.5 0.5h13v12h-13z" fill="none" stroke="#444"/><path d="M3.5 3.5h7v6h-7zM5 5.5h4M5 7.5h4" fill="none" stroke="#444"/></svg>
<svg style="left:260px;top:762px;" width="15" height="14" viewBox="0 0 15 14"><path d="M0.5 0.5h13v12h-13zM0.5 7.5h8v-7M4.5 0.5v4" fill="none" stroke="#444"/></svg>
<div style="left:293px;top:768px;width:8px;height:1px;background:#444;"></div>
<div style="left:306px;top:768px;width:100px;height:1px;background:#9a9a9a;"></div>
<div style="left:354px;top:764px;width:5px;height:11px;background:#777;"></div>
<div style="left:411px;top:768px;width:9px;height:1px;background:#444;"></div>
<div style="left:415px;top:764px;width:1px;height:9px;background:#444;"></div>
<div class="t" style="top:761px;font-size:11.5px;line-height:16px;color:#555;letter-spacing:-0.722px;left:433px;">100 %</div>
<div style="left:30px;top:532px;width:47px;height:22px;border:3px solid #ff2a1a;border-radius:3px"></div>
<div style="left:28px;top:556px;width:43px;height:17px;border:3px solid #1e9bf5;border-radius:3px"></div>
<div style="left:188px;top:534px;width:45px;height:20px;border:3px solid #ff2a1a;border-radius:3px"></div>
<div style="left:186px;top:555px;width:47px;height:20px;border:3px solid #1e9bf5;border-radius:3px"></div>
<div style="left:408px;top:532px;width:35px;height:20px;border:3px solid #ff2a1a;border-radius:3px"></div>
<div style="left:409px;top:554px;width:33px;height:19px;border:3px solid #1e9bf5;border-radius:3px"></div>
<div style="left:527px;top:533px;width:40px;height:19px;border:3px solid #ff2a1a;border-radius:3px"></div>
<div style="left:739px;top:533px;width:33px;height:20px;border:3px solid #ff2a1a;border-radius:3px"></div>
<div style="left:1320px;top:528px;width:32px;height:29px;border:3px solid #ff2a1a;border-radius:3px"></div>
<div style="left:534px;top:600px;width:30px;height:55px;border:3px solid #1e9bf5;border-radius:3px"></div>
<div style="left:736px;top:600px;width:42px;height:58px;border:3px solid #1e9bf5;border-radius:3px"></div>
<div style="left:997px;top:601px;width:186px;height:37px;border:3px solid #1e9bf5;border-radius:3px"></div>
<div style="left:1324px;top:600px;width:27px;height:37px;border:3px solid #1e9bf5;border-radius:3px"></div>
<svg style="left:440px;top:525px;" width="100" height="110" viewBox="0 0 100 110"><path d="M7.8 15 L64 11.6 L64 7.8 L82 17.6 L63 25 L64 19.9 Z" fill="#ff2a1a"/><path d="M7.8 42.2 L82 79.5 L87 83 L88 95.7 L70.7 94.5 L78 90 Z" fill="#1e9bf5"/></svg>
<div class="t" style="top:533.5px;font-size:12.5px;line-height:18px;color:#222;left:320.5px;width:400px;text-align:center;">23</div>
<div class="t" style="top:601.5px;font-size:12.5px;line-height:18px;color:#222;left:513.5px;clip-path:inset(0 0 0 6.5px);">26</div>
</body></html>
